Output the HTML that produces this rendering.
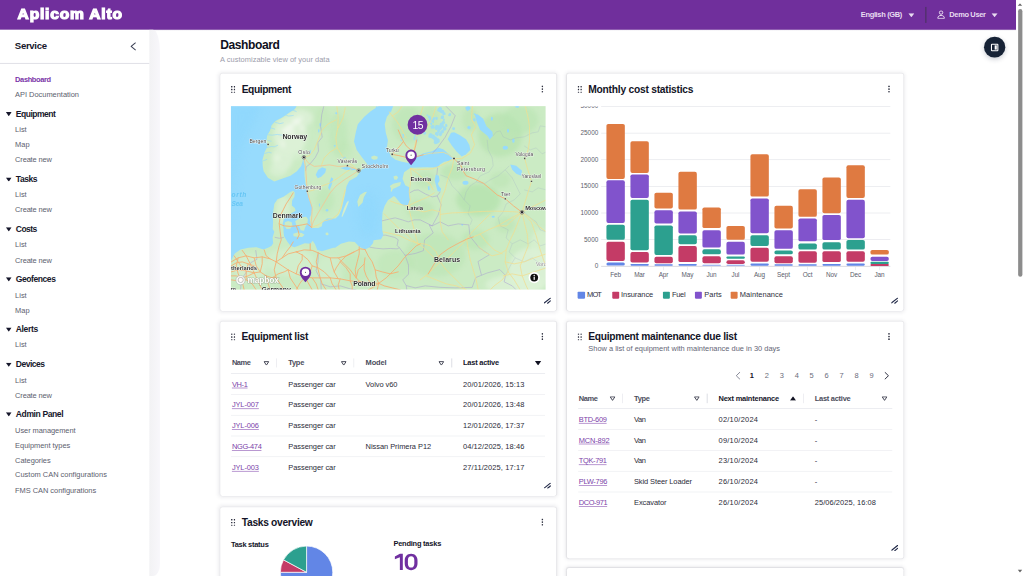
<!DOCTYPE html>
<html><head><meta charset="utf-8"><title>Aplicom Alto - Dashboard</title><style>
html,body{margin:0;padding:0;background:#fff;overflow:hidden;width:1024px;height:576px}
#root{position:absolute;left:0;top:0;width:1920px;height:1080px;transform:scale(0.5333333);transform-origin:0 0;overflow:hidden;background:#fff;font-family:"Liberation Sans",sans-serif}
.t{position:absolute;white-space:nowrap;font-family:"Liberation Sans",sans-serif}
</style></head><body><div id="root">
<div style="position:absolute;left:0px;top:0px;width:1905px;height:56.01px;background:#702f9c;"></div>
<div style="position:absolute;left:0px;top:56.01px;width:1905px;height:2.49px;background:linear-gradient(#e9e7ee,#fff);"></div>
<div class="t" style="left:33.19px;top:7.00px;font-size:26.5px;line-height:40px;font-weight:700;color:#fff;-webkit-text-stroke:2.2px #fff;letter-spacing:1.4px;transform:scaleX(1.1);transform-origin:0 50%;">Aplicom Alto</div>
<div class="t" style="left:1614px;top:18.19px;font-size:14px;line-height:18px;font-weight:700;color:#e8dcf1;letter-spacing:-0.634px;">English (GB)</div>
<svg style="position:absolute;left:1702.69px;top:24.66px" width="11.62" height="7.31" viewBox="0 0 10 10" preserveAspectRatio="none"><path d="M0 0 L10 0 L5 10 Z" fill="#e8dcf1"/></svg>
<div style="position:absolute;left:1735.22px;top:13.31px;width:1.59px;height:29.25px;background:#48325e;"></div>
<svg style="position:absolute;left:1756.69px;top:18.56px" width="15" height="16.88" viewBox="0 0 16 18" fill="none" stroke="#e8dcf1" stroke-width="2"><circle cx="8" cy="4.9" r="3.4"/><path d="M1.4 16.6 C1.4 12.4 4 10.6 8 10.6 C12 10.6 14.6 12.4 14.6 16.6 Z" stroke-linejoin="round"/></svg>
<div class="t" style="left:1779.94px;top:18.19px;font-size:14px;line-height:18px;font-weight:700;color:#e8dcf1;letter-spacing:-0.662px;">Demo User</div>
<svg style="position:absolute;left:1859.25px;top:24.66px" width="11.62" height="7.31" viewBox="0 0 10 10" preserveAspectRatio="none"><path d="M0 0 L10 0 L5 10 Z" fill="#e8dcf1"/></svg>
<div style="position:absolute;left:1905px;top:0px;width:15px;height:1080px;background:#fff;"></div>
<div style="position:absolute;left:1908.75px;top:17.25px;width:8.06px;height:502.12px;background:#8c8c8c;border-radius:4px;"></div>
<svg style="position:absolute;left:1908.28px;top:5.91px" width="9" height="5.44" viewBox="0 0 10 10" preserveAspectRatio="none"><path d="M0 10 L10 10 L5 0 Z" fill="#666"/></svg>
<svg style="position:absolute;left:1908.28px;top:1068.28px" width="9" height="5.44" viewBox="0 0 10 10" preserveAspectRatio="none"><path d="M0 0 L10 0 L5 10 Z" fill="#666"/></svg>
<div style="position:absolute;left:0px;top:56.01px;width:279.75px;height:1023.99px;background:#fff;"></div>
<div style="position:absolute;left:279.75px;top:56.01px;width:20.44px;height:1023.99px;background:linear-gradient(90deg,#f2f2f4,#f8f7fb);border-radius:0 13.12px 13.12px 0 / 0 41.25px 22.5px 0"></div>
<div class="t" style="left:27.75px;top:75.31px;font-size:18px;line-height:23px;font-weight:700;color:#16172b;letter-spacing:-0.583px;">Service</div>
<svg style="position:absolute;left:244.12px;top:78.94px" width="11.25" height="15.75" viewBox="0 0 6 8.4" fill="none" stroke="#3c4156" stroke-width="1.1" stroke-linecap="round" stroke-linejoin="round"><path d="M5.2 0.7 L1 4.2 L5.2 7.7"/></svg>
<div style="position:absolute;left:0px;top:118.31px;width:279.75px;height:1.41px;background:#e2e2e8;"></div>
<div class="t" style="left:28.31px;top:139.69px;font-size:14px;line-height:18px;font-weight:700;color:#7a35a8;letter-spacing:-0.703px;">Dashboard</div>
<div class="t" style="left:28.31px;top:168.00px;font-size:14px;line-height:18px;font-weight:400;color:#5c5e6e;letter-spacing:-0.051px;">API Documentation</div>
<svg style="position:absolute;left:10.69px;top:209.81px" width="10.88" height="7.88" viewBox="0 0 10 10" preserveAspectRatio="none"><path d="M0 0 L10 0 L5 10 Z" fill="#16172b"/></svg>
<div class="t" style="left:29.62px;top:202.69px;font-size:16px;line-height:21px;font-weight:700;color:#16172b;letter-spacing:-0.936px;">Equipment</div>
<div class="t" style="left:28.31px;top:234.38px;font-size:14px;line-height:18px;font-weight:400;color:#5c5e6e;letter-spacing:-0.016px;">List</div>
<div class="t" style="left:28.31px;top:261.56px;font-size:14px;line-height:18px;font-weight:400;color:#5c5e6e;letter-spacing:0.070px;">Map</div>
<div class="t" style="left:28.31px;top:290.44px;font-size:14px;line-height:18px;font-weight:400;color:#5c5e6e;letter-spacing:-0.309px;">Create new</div>
<svg style="position:absolute;left:10.69px;top:332.62px" width="10.88" height="7.88" viewBox="0 0 10 10" preserveAspectRatio="none"><path d="M0 0 L10 0 L5 10 Z" fill="#16172b"/></svg>
<div class="t" style="left:29.62px;top:325.50px;font-size:16px;line-height:21px;font-weight:700;color:#16172b;letter-spacing:-0.875px;">Tasks</div>
<div class="t" style="left:28.31px;top:356.06px;font-size:14px;line-height:18px;font-weight:400;color:#5c5e6e;letter-spacing:-0.016px;">List</div>
<div class="t" style="left:28.31px;top:384.19px;font-size:14px;line-height:18px;font-weight:400;color:#5c5e6e;letter-spacing:-0.309px;">Create new</div>
<svg style="position:absolute;left:10.69px;top:426.19px" width="10.88" height="7.88" viewBox="0 0 10 10" preserveAspectRatio="none"><path d="M0 0 L10 0 L5 10 Z" fill="#16172b"/></svg>
<div class="t" style="left:29.62px;top:419.06px;font-size:16px;line-height:21px;font-weight:700;color:#16172b;letter-spacing:-1.082px;">Costs</div>
<div class="t" style="left:28.31px;top:450.19px;font-size:14px;line-height:18px;font-weight:400;color:#5c5e6e;letter-spacing:-0.016px;">List</div>
<div class="t" style="left:28.31px;top:478.50px;font-size:14px;line-height:18px;font-weight:400;color:#5c5e6e;letter-spacing:-0.309px;">Create new</div>
<svg style="position:absolute;left:10.69px;top:520.12px" width="10.88" height="7.88" viewBox="0 0 10 10" preserveAspectRatio="none"><path d="M0 0 L10 0 L5 10 Z" fill="#16172b"/></svg>
<div class="t" style="left:29.62px;top:513.00px;font-size:16px;line-height:21px;font-weight:700;color:#16172b;letter-spacing:-0.828px;">Geofences</div>
<div class="t" style="left:28.31px;top:543.56px;font-size:14px;line-height:18px;font-weight:400;color:#5c5e6e;letter-spacing:-0.016px;">List</div>
<div class="t" style="left:28.31px;top:572.62px;font-size:14px;line-height:18px;font-weight:400;color:#5c5e6e;letter-spacing:0.070px;">Map</div>
<svg style="position:absolute;left:10.69px;top:613.88px" width="10.88" height="7.88" viewBox="0 0 10 10" preserveAspectRatio="none"><path d="M0 0 L10 0 L5 10 Z" fill="#16172b"/></svg>
<div class="t" style="left:29.62px;top:606.75px;font-size:16px;line-height:21px;font-weight:700;color:#16172b;letter-spacing:-0.672px;">Alerts</div>
<div class="t" style="left:28.31px;top:637.31px;font-size:14px;line-height:18px;font-weight:400;color:#5c5e6e;letter-spacing:-0.016px;">List</div>
<svg style="position:absolute;left:10.69px;top:679.87px" width="10.88" height="7.88" viewBox="0 0 10 10" preserveAspectRatio="none"><path d="M0 0 L10 0 L5 10 Z" fill="#16172b"/></svg>
<div class="t" style="left:29.62px;top:672.75px;font-size:16px;line-height:21px;font-weight:700;color:#16172b;letter-spacing:-0.958px;">Devices</div>
<div class="t" style="left:28.31px;top:703.50px;font-size:14px;line-height:18px;font-weight:400;color:#5c5e6e;letter-spacing:-0.016px;">List</div>
<div class="t" style="left:28.31px;top:731.81px;font-size:14px;line-height:18px;font-weight:400;color:#5c5e6e;letter-spacing:-0.309px;">Create new</div>
<svg style="position:absolute;left:10.69px;top:773.44px" width="10.88" height="7.88" viewBox="0 0 10 10" preserveAspectRatio="none"><path d="M0 0 L10 0 L5 10 Z" fill="#16172b"/></svg>
<div class="t" style="left:29.62px;top:766.31px;font-size:16px;line-height:21px;font-weight:700;color:#16172b;letter-spacing:-0.728px;">Admin Panel</div>
<div class="t" style="left:28.31px;top:798.19px;font-size:14px;line-height:18px;font-weight:400;color:#5c5e6e;letter-spacing:-0.124px;">User management</div>
<div class="t" style="left:28.31px;top:825.75px;font-size:14px;line-height:18px;font-weight:400;color:#5c5e6e;letter-spacing:-0.057px;">Equipment types</div>
<div class="t" style="left:28.31px;top:853.88px;font-size:14px;line-height:18px;font-weight:400;color:#5c5e6e;letter-spacing:-0.106px;">Categories</div>
<div class="t" style="left:28.31px;top:881.25px;font-size:14px;line-height:18px;font-weight:400;color:#5c5e6e;letter-spacing:-0.026px;">Custom CAN configurations</div>
<div class="t" style="left:28.31px;top:909.94px;font-size:14px;line-height:18px;font-weight:400;color:#5c5e6e;letter-spacing:-0.095px;">FMS CAN configurations</div>
<div class="t" style="left:413.06px;top:68.94px;font-size:22.6px;line-height:29px;font-weight:700;color:#0f1020;letter-spacing:-0.807px;">Dashboard</div>
<div class="t" style="left:412.69px;top:102.94px;font-size:14px;line-height:18px;font-weight:400;color:#9c9dab;letter-spacing:0.046px;">A customizable view of your data</div>
<div style="position:absolute;left:1845.19px;top:69px;width:39.38px;height:39.38px;border-radius:50%;background:#172336;box-shadow:0 3px 10px rgba(20,30,60,0.22)"></div>
<div style="position:absolute;left:1857.75px;top:81.56px;width:14.25px;height:14.25px;border:2.2px solid #fff;box-sizing:border-box;border-radius:2px"><div style="position:absolute;right:1.2px;top:1.2px;bottom:1.2px;width:3.4px;background:#fff"></div></div>
<div style="position:absolute;left:412.69px;top:138.38px;width:630.37px;height:445.12px;background:#fff;border-radius:4px;box-shadow:0 0 8px 1px rgba(40,40,70,0.12), 0 0 2px rgba(40,40,70,0.08);"></div>
<div style="position:absolute;left:1062.56px;top:138.38px;width:631.12px;height:445.12px;background:#fff;border-radius:4px;box-shadow:0 0 8px 1px rgba(40,40,70,0.12), 0 0 2px rgba(40,40,70,0.08);"></div>
<div style="position:absolute;left:412.69px;top:602.62px;width:630.37px;height:327.38px;background:#fff;border-radius:4px;box-shadow:0 0 8px 1px rgba(40,40,70,0.12), 0 0 2px rgba(40,40,70,0.08);"></div>
<div style="position:absolute;left:1062.56px;top:602.62px;width:631.12px;height:444px;background:#fff;border-radius:4px;box-shadow:0 0 8px 1px rgba(40,40,70,0.12), 0 0 2px rgba(40,40,70,0.08);"></div>
<div style="position:absolute;left:412.69px;top:951.19px;width:630.37px;height:173.81px;background:#fff;border-radius:4px;box-shadow:0 0 8px 1px rgba(40,40,70,0.12), 0 0 2px rgba(40,40,70,0.08);"></div>
<div style="position:absolute;left:1062.56px;top:1065px;width:631.12px;height:60px;background:#fff;border-radius:4px;box-shadow:0 0 8px 1px rgba(40,40,70,0.12), 0 0 2px rgba(40,40,70,0.08);"></div>
<svg style="position:absolute;left:432.94px;top:160.5px" width="8.25" height="13.88" viewBox="0 0 4.4 7.4"><rect x="0.08" y="0.08" width="1.45" height="1.45" rx="0.35" fill="#2f3140"/><rect x="0.08" y="2.98" width="1.45" height="1.45" rx="0.35" fill="#2f3140"/><rect x="0.08" y="5.88" width="1.45" height="1.45" rx="0.35" fill="#2f3140"/><rect x="2.88" y="0.08" width="1.45" height="1.45" rx="0.35" fill="#2f3140"/><rect x="2.88" y="2.98" width="1.45" height="1.45" rx="0.35" fill="#2f3140"/><rect x="2.88" y="5.88" width="1.45" height="1.45" rx="0.35" fill="#2f3140"/></svg>
<div class="t" style="left:453.19px;top:155.19px;font-size:19.2px;line-height:26px;font-weight:700;color:#131427;letter-spacing:-0.768px;">Equipment</div>
<svg style="position:absolute;left:1014.75px;top:160.31px" width="3.75" height="13.88" viewBox="0 0 2 7.4"><circle cx="1" cy="1.00" r="0.85" fill="#2f3140"/><circle cx="1" cy="3.70" r="0.85" fill="#2f3140"/><circle cx="1" cy="6.40" r="0.85" fill="#2f3140"/></svg>
<svg style="position:absolute;left:1020px;top:558.38px" width="13.12" height="11.25" viewBox="0 0 7 6" fill="none" stroke="#222a48" stroke-width="1.15" stroke-linecap="round"><path d="M0.5 5.2 L6.4 0.5 M3.6 5.6 L6.4 3.3"/></svg>
<div style="position:absolute;left:425.62px;top:191.25px;width:605px;height:359.44px;overflow:hidden"><svg width="605" height="359.44" viewBox="227 102 322.667 191.7" style="position:absolute;left:0;top:0;display:block">
<defs><filter id="b2" x="-50%" y="-50%" width="200%" height="200%"><feGaussianBlur stdDeviation="2.2"/></filter><filter id="b1" x="-50%" y="-50%" width="200%" height="200%"><feGaussianBlur stdDeviation="1"/></filter><filter id="b4" x="-50%" y="-50%" width="200%" height="200%"><feGaussianBlur stdDeviation="5"/></filter><clipPath id="landclip"><path d="M300.0 100.0 L294.6 109.3 L288.7 113.1 L281.7 117.9 L275.2 121.1 L271.4 125.5 L269.8 130.8 L267.1 135.1 L266.1 141.6 L267.1 147.0 L264.4 152.4 L262.3 159.9 L262.5 166.1 L263.4 171.5 L267.7 177.9 L274.1 181.7 L281.7 179.0 L290.3 175.8 L296.7 171.5 L301.0 166.1 L302.8 160.5 L304.3 166.0 L304.3 175.8 L305.3 184.4 L307.7 190.0 L308.5 198.7 L312.0 207.4 L311.1 214.3 L309.4 217.8 L310.3 224.7 L312.0 228.2 L318.1 228.2 L321.6 226.5 L322.4 222.1 L326.8 218.6 L335.4 218.6 L338.9 215.2 L341.5 209.1 L343.3 201.3 L345.0 194.3 L346.3 186.5 L349.0 181.1 L356.5 176.8 L361.9 169.3 L368.5 167.0 L366.2 163.1 L361.9 157.7 L356.5 150.2 L353.8 141.6 L355.5 133.0 L357.6 124.4 L364.1 116.8 L370.5 111.5 L378.1 106.3 L380.0 100.0 Z M395.3 100.0 L391.0 111.5 L386.7 116.8 L384.5 124.4 L385.6 133.0 L387.7 140.5 L386.7 148.0 L388.8 152.4 L391.0 156.7 L395.3 159.9 L401.7 162.0 L408.2 163.1 L412.0 161.0 L416.8 156.7 L423.3 153.4 L431.9 151.3 L438.3 148.0 L443.0 149.5 L447.0 153.0 L450.8 156.0 L453.8 158.6 L449.0 161.0 L444.0 162.0 L440.0 164.5 L437.3 167.7 L425.0 167.3 L410.3 167.9 L403.9 172.5 L402.3 179.0 L405.0 185.5 L409.3 187.6 L409.3 193.0 L409.8 200.5 L408.2 204.8 L403.9 206.4 L399.6 202.7 L395.3 197.3 L393.7 196.2 L387.7 200.5 L384.5 205.9 L382.4 212.4 L381.8 221.0 L382.0 229.6 L383.1 235.3 L380.8 239.3 L373.4 240.5 L372.8 243.3 L369.4 247.3 L364.8 249.6 L359.1 246.8 L354.5 242.2 L348.7 241.6 L340.7 243.9 L335.0 247.9 L333.1 247.9 L327.4 249.6 L321.7 251.4 L317.1 250.2 L314.8 244.5 L312.5 241.0 L310.2 243.9 L304.5 243.3 L298.8 245.6 L294.2 247.3 L290.7 246.2 L287.3 242.2 L283.9 236.5 L283.3 231.9 L283.4 229.1 L282.5 223.9 L283.4 219.5 L287.0 216.0 L292.0 213.0 L295.5 210.8 L294.6 208.2 L291.6 205.6 L292.0 200.4 L294.2 196.9 L294.6 192.6 L292.9 190.9 L289.4 192.6 L283.4 196.9 L277.3 199.5 L274.2 203.9 L273.4 209.1 L272.5 216.0 L272.9 222.1 L272.5 229.1 L274.1 231.9 L272.4 237.6 L273.0 243.3 L271.2 246.2 L267.8 247.9 L263.2 249.6 L256.4 247.3 L248.3 247.9 L240.3 249.6 L234.6 253.6 L231.1 260.5 L225.0 262.0 L225.0 296.0 L552.0 296.0 L552.0 100.0 Z"/></clipPath></defs>
<rect x="226" y="101" width="326" height="196" fill="#97dbfd"/>
<g filter="url(#b4)" opacity="0.55">
<path d="M229 104 L262 104 L240 150 L232 200 L229 230 Z" fill="#8bd6fd"/>
<ellipse cx="368" cy="215" rx="10" ry="22" fill="#8dd7fd"/>
</g>
<path d="M300.0 100.0 L294.6 109.3 L288.7 113.1 L281.7 117.9 L275.2 121.1 L271.4 125.5 L269.8 130.8 L267.1 135.1 L266.1 141.6 L267.1 147.0 L264.4 152.4 L262.3 159.9 L262.5 166.1 L263.4 171.5 L267.7 177.9 L274.1 181.7 L281.7 179.0 L290.3 175.8 L296.7 171.5 L301.0 166.1 L302.8 160.5 L304.3 166.0 L304.3 175.8 L305.3 184.4 L307.7 190.0 L308.5 198.7 L312.0 207.4 L311.1 214.3 L309.4 217.8 L310.3 224.7 L312.0 228.2 L318.1 228.2 L321.6 226.5 L322.4 222.1 L326.8 218.6 L335.4 218.6 L338.9 215.2 L341.5 209.1 L343.3 201.3 L345.0 194.3 L346.3 186.5 L349.0 181.1 L356.5 176.8 L361.9 169.3 L368.5 167.0 L366.2 163.1 L361.9 157.7 L356.5 150.2 L353.8 141.6 L355.5 133.0 L357.6 124.4 L364.1 116.8 L370.5 111.5 L378.1 106.3 L380.0 100.0 Z" fill="#cbebc4"/>
<path d="M395.3 100.0 L391.0 111.5 L386.7 116.8 L384.5 124.4 L385.6 133.0 L387.7 140.5 L386.7 148.0 L388.8 152.4 L391.0 156.7 L395.3 159.9 L401.7 162.0 L408.2 163.1 L412.0 161.0 L416.8 156.7 L423.3 153.4 L431.9 151.3 L438.3 148.0 L443.0 149.5 L447.0 153.0 L450.8 156.0 L453.8 158.6 L449.0 161.0 L444.0 162.0 L440.0 164.5 L437.3 167.7 L425.0 167.3 L410.3 167.9 L403.9 172.5 L402.3 179.0 L405.0 185.5 L409.3 187.6 L409.3 193.0 L409.8 200.5 L408.2 204.8 L403.9 206.4 L399.6 202.7 L395.3 197.3 L393.7 196.2 L387.7 200.5 L384.5 205.9 L382.4 212.4 L381.8 221.0 L382.0 229.6 L383.1 235.3 L380.8 239.3 L373.4 240.5 L372.8 243.3 L369.4 247.3 L364.8 249.6 L359.1 246.8 L354.5 242.2 L348.7 241.6 L340.7 243.9 L335.0 247.9 L333.1 247.9 L327.4 249.6 L321.7 251.4 L317.1 250.2 L314.8 244.5 L312.5 241.0 L310.2 243.9 L304.5 243.3 L298.8 245.6 L294.2 247.3 L290.7 246.2 L287.3 242.2 L283.9 236.5 L283.3 231.9 L283.4 229.1 L282.5 223.9 L283.4 219.5 L287.0 216.0 L292.0 213.0 L295.5 210.8 L294.6 208.2 L291.6 205.6 L292.0 200.4 L294.2 196.9 L294.6 192.6 L292.9 190.9 L289.4 192.6 L283.4 196.9 L277.3 199.5 L274.2 203.9 L273.4 209.1 L272.5 216.0 L272.9 222.1 L272.5 229.1 L274.1 231.9 L272.4 237.6 L273.0 243.3 L271.2 246.2 L267.8 247.9 L263.2 249.6 L256.4 247.3 L248.3 247.9 L240.3 249.6 L234.6 253.6 L231.1 260.5 L225.0 262.0 L225.0 296.0 L552.0 296.0 L552.0 100.0 Z" fill="#cbebc4"/>
<path d="M284.6 222.5 L288.0 221.2 L291.5 222.5 L292.2 226.0 L290.0 229.0 L286.5 229.2 L284.4 226.5 Z" fill="#cbebc4"/>
<path d="M295.0 221.5 L298.5 218.8 L302.0 217.5 L306.0 216.8 L307.8 219.5 L307.0 224.0 L305.0 227.5 L303.8 231.0 L300.5 230.5 L299.0 226.5 L296.0 225.5 Z" fill="#cbebc4"/>
<path d="M293.0 234.0 L297.0 232.6 L301.5 233.2 L304.3 235.0 L302.0 237.2 L297.0 237.0 L293.5 236.3 Z" fill="#cbebc4"/>
<path d="M325.4 232.8 L327.6 232.6 L328.6 234.4 L327.0 235.6 L325.4 234.6 Z" fill="#cbebc4"/>
<path d="M347.9 200.8 L348.6 202.0 L345.5 210.0 L342.3 217.0 L341.3 216.6 L343.6 209.0 L346.3 203.0 Z" fill="#d3eecd"/>
<path d="M366.8 191.9 L363.6 197.3 L362.4 202.7 L358.1 207.2 L357.1 201.6 L359.8 195.1 L364.1 192.4 Z" fill="#cbebc4"/>
<path d="M393.2 176.6 L396.0 175.6 L398.0 177.4 L396.6 179.8 L394.0 179.6 Z" fill="#cbebc4"/>
<path d="M389.6 186.2 L393.0 184.0 L397.0 183.0 L400.8 182.2 L400.0 185.6 L396.0 187.6 L392.6 189.2 L391.6 192.0 L390.4 191.4 L391.0 188.6 Z" fill="#cbebc4"/>
<path d="M371.0 157.0 L374.0 155.6 L377.6 156.8 L377.0 159.4 L373.6 160.0 L371.4 159.0 Z" fill="#cbebc4"/>
<g clip-path="url(#landclip)"><g filter="url(#b2)">
<ellipse cx="338.0" cy="135.0" rx="9.0" ry="22.0" fill="#b9e4b2" opacity="0.45"/>
<ellipse cx="325.0" cy="200.0" rx="9.0" ry="12.0" fill="#b9e4b2" opacity="0.45"/>
<ellipse cx="345.0" cy="150.0" rx="6.0" ry="10.0" fill="#b9e4b2" opacity="0.35"/>
<ellipse cx="322.0" cy="120.0" rx="8.0" ry="12.0" fill="#b9e4b2" opacity="0.35"/>
<ellipse cx="408.0" cy="125.0" rx="16.0" ry="18.0" fill="#b9e4b2" opacity="0.55"/>
<ellipse cx="430.0" cy="120.0" rx="10.0" ry="14.0" fill="#b9e4b2" opacity="0.4"/>
<ellipse cx="478.0" cy="200.0" rx="22.0" ry="16.0" fill="#b9e4b2" opacity="1"/>
<ellipse cx="500.0" cy="135.0" rx="22.0" ry="22.0" fill="#b9e4b2" opacity="0.8"/>
<ellipse cx="455.0" cy="172.0" rx="14.0" ry="8.0" fill="#b9e4b2" opacity="0.7"/>
<ellipse cx="520.0" cy="120.0" rx="18.0" ry="14.0" fill="#b9e4b2" opacity="0.6"/>
<ellipse cx="470.0" cy="120.0" rx="8.0" ry="12.0" fill="#b9e4b2" opacity="0.5"/>
<ellipse cx="435.0" cy="255.0" rx="30.0" ry="22.0" fill="#b9e4b2" opacity="0.55"/>
<ellipse cx="420.0" cy="210.0" rx="14.0" ry="10.0" fill="#b9e4b2" opacity="0.5"/>
<ellipse cx="425.0" cy="180.0" rx="10.0" ry="8.0" fill="#b9e4b2" opacity="0.5"/>
<ellipse cx="500.0" cy="180.0" rx="10.0" ry="8.0" fill="#b9e4b2" opacity="0.5"/>
<ellipse cx="475.0" cy="240.0" rx="14.0" ry="10.0" fill="#b9e4b2" opacity="0.6"/>
<ellipse cx="395.0" cy="265.0" rx="18.0" ry="14.0" fill="#b9e4b2" opacity="0.4"/>
<ellipse cx="355.0" cy="268.0" rx="18.0" ry="14.0" fill="#b9e4b2" opacity="0.35"/>
<ellipse cx="505.0" cy="225.0" rx="10.0" ry="8.0" fill="#b9e4b2" opacity="0.5"/>
<ellipse cx="290.0" cy="135.0" rx="17.0" ry="19.0" fill="#dcf1d6" opacity="1"/>
<ellipse cx="282.0" cy="158.0" rx="11.0" ry="13.0" fill="#dcf1d6" opacity="0.9"/>
<ellipse cx="300.0" cy="118.0" rx="13.0" ry="9.0" fill="#dcf1d6" opacity="0.9"/>
<ellipse cx="278.0" cy="170.0" rx="9.0" ry="7.0" fill="#dcf1d6" opacity="0.7"/>
<ellipse cx="296.0" cy="150.0" rx="8.0" ry="10.0" fill="#dcf1d6" opacity="0.6"/>
<ellipse cx="530.0" cy="270.0" rx="22.0" ry="22.0" fill="#dcf1d6" opacity="0.9"/>
<ellipse cx="515.0" cy="285.0" rx="30.0" ry="10.0" fill="#dcf1d6" opacity="0.8"/>
<ellipse cx="540.0" cy="245.0" rx="10.0" ry="16.0" fill="#dcf1d6" opacity="0.6"/>
<ellipse cx="283.0" cy="210.0" rx="7.0" ry="14.0" fill="#dcf1d6" opacity="0.7"/>
<ellipse cx="290.0" cy="262.0" rx="25.0" ry="14.0" fill="#dcf1d6" opacity="0.45"/>
<ellipse cx="250.0" cy="268.0" rx="16.0" ry="14.0" fill="#dcf1d6" opacity="0.5"/>
<ellipse cx="330.0" cy="270.0" rx="14.0" ry="14.0" fill="#dcf1d6" opacity="0.3"/>
<ellipse cx="296.0" cy="122.0" rx="4.0" ry="2.4" fill="#f6fbf4" opacity="0.9"/>
<ellipse cx="290.0" cy="127.0" rx="4.0" ry="2.2" fill="#f6fbf4" opacity="0.9"/>
<ellipse cx="285.0" cy="131.0" rx="3.4" ry="2.4" fill="#f6fbf4" opacity="0.9"/>
<ellipse cx="291.0" cy="133.0" rx="3.0" ry="2.0" fill="#f6fbf4" opacity="0.8"/>
<ellipse cx="302.0" cy="128.0" rx="2.4" ry="2.0" fill="#f6fbf4" opacity="0.7"/>
<ellipse cx="283.0" cy="145.0" rx="2.0" ry="2.4" fill="#f6fbf4" opacity="0.7"/>
<ellipse cx="281.0" cy="141.0" rx="1.6" ry="2.0" fill="#f6fbf4" opacity="0.6"/>
<ellipse cx="277.0" cy="158.0" rx="1.6" ry="3.0" fill="#f6fbf4" opacity="0.6"/>
<ellipse cx="300.0" cy="118.0" rx="3.0" ry="1.6" fill="#f6fbf4" opacity="0.7"/>
</g></g>
<path d="M450.8 133.0 L447.5 139.4 L451.8 145.9 L456.1 151.3 L461.5 156.7 L465.8 154.5 L470.1 150.2 L469.1 144.8 L465.8 139.4 L459.4 135.1 L454.0 132.4 Z" fill="#97dbfd"/>
<path d="M474.4 114.1 L476.6 122.2 L479.8 129.8 L487.4 136.2 L489.5 139.6 L492.7 136.2 L492.2 131.9 L486.3 126.5 L483.0 119.0 L477.7 114.7 Z" fill="#97dbfd"/>
<path d="M435.6 174.7 L438.6 175.8 L439.4 180.6 L437.6 184.0 L439.0 186.6 L441.0 189.0 L440.2 192.0 L437.4 191.4 L436.0 186.5 L434.4 180.5 Z" fill="#97dbfd"/>
<path d="M318.0 170.0 L322.0 167.5 L326.0 169.0 L325.0 173.0 L321.0 177.0 L317.5 178.5 L315.5 175.0 Z" fill="#97dbfd"/>
<path d="M331.0 177.5 L333.0 179.0 L331.2 186.0 L329.2 190.5 L328.0 188.0 L329.5 182.0 Z" fill="#97dbfd"/>
<path d="M340.0 168.2 L346.0 167.0 L352.0 168.2 L357.6 169.6 L352.0 170.4 L345.0 169.8 Z" fill="#97dbfd"/>
<path d="M510.0 164.6 L516.0 166.0 L521.8 171.0 L521.0 175.8 L516.0 174.0 L512.0 170.0 Z" fill="#97dbfd"/>
<path d="M427.6 186.6 L429.2 186.2 L429.6 190.0 L428.0 190.4 Z" fill="#97dbfd"/>
<ellipse cx="465.3" cy="182.8" rx="3.0" ry="2.0" fill="#97dbfd"/>
<ellipse cx="505.1" cy="148.0" rx="2.7" ry="2.0" fill="#97dbfd"/>
<ellipse cx="513.2" cy="140.8" rx="1.2" ry="2.2" fill="#97dbfd"/>
<ellipse cx="507.8" cy="130.8" rx="1.0" ry="2.0" fill="#97dbfd"/>
<ellipse cx="491.7" cy="119.0" rx="1.0" ry="2.0" fill="#97dbfd"/>
<ellipse cx="468.0" cy="108.2" rx="2.4" ry="1.6" fill="#97dbfd"/>
<ellipse cx="468.5" cy="127.6" rx="1.4" ry="1.0" fill="#97dbfd"/>
<ellipse cx="517.0" cy="107.0" rx="2.0" ry="1.0" fill="#97dbfd"/>
<ellipse cx="336.4" cy="113.5" rx="1.4" ry="1.0" fill="#97dbfd"/>
<ellipse cx="320.0" cy="125.0" rx="0.8" ry="2.0" fill="#97dbfd"/>
<ellipse cx="344.0" cy="158.0" rx="1.6" ry="1.0" fill="#97dbfd"/>
<ellipse cx="310.0" cy="152.0" rx="0.7" ry="2.2" fill="#97dbfd"/>
<ellipse cx="334.5" cy="146.0" rx="1.0" ry="0.8" fill="#97dbfd"/>
<ellipse cx="493.0" cy="217.0" rx="1.6" ry="1.0" fill="#97dbfd"/>
<ellipse cx="376.5" cy="107.5" rx="1.0" ry="1.0" fill="#97dbfd"/>
<ellipse cx="326.8" cy="210.4" rx="1.3" ry="1.3" fill="#97dbfd"/>
<ellipse cx="319.2" cy="205.2" rx="0.6" ry="1.7" fill="#97dbfd"/>
<ellipse cx="462.0" cy="225.0" rx="1.0" ry="0.8" fill="#97dbfd"/>
<ellipse cx="318.6" cy="131.0" rx="0.7" ry="1.8" fill="#97dbfd"/>
<g opacity="0.8">
<path d="M438.8 112.2 L436.8 110.6 L438.1 108.4 L439.8 106.7 L441.8 108.1 L441.8 110.5 L440.9 112.8 Z" fill="#97dbfd"/>
<path d="M444.2 112.4 L442.8 113.6 L441.3 113.6 L440.0 112.4 L440.1 110.0 L442.1 109.9 L443.6 110.5 Z" fill="#97dbfd"/>
<path d="M442.2 112.1 L443.9 111.8 L445.0 112.9 L445.6 114.6 L444.0 115.2 L442.6 115.7 L442.2 114.0 Z" fill="#97dbfd"/>
<path d="M450.3 116.1 L449.2 116.5 L447.9 115.9 L448.4 114.3 L449.2 113.2 L450.6 113.5 L451.0 115.0 Z" fill="#97dbfd"/>
<path d="M427.7 116.5 L428.4 115.7 L429.5 115.7 L430.5 116.6 L429.9 118.1 L428.7 118.5 L427.5 118.0 Z" fill="#97dbfd"/>
<path d="M428.7 120.3 L428.5 118.2 L430.2 117.1 L431.6 118.3 L432.4 120.0 L431.4 121.7 L429.5 122.2 Z" fill="#97dbfd"/>
<path d="M433.3 117.3 L434.9 117.3 L434.7 119.0 L434.3 120.3 L432.9 120.8 L432.3 119.4 L432.2 118.0 Z" fill="#97dbfd"/>
<path d="M437.6 118.9 L436.9 120.1 L435.6 119.9 L434.7 118.9 L435.3 117.6 L436.3 116.8 L437.3 117.5 Z" fill="#97dbfd"/>
<path d="M440.6 116.8 L441.7 115.3 L443.6 115.8 L443.8 117.8 L443.2 119.5 L441.7 119.2 L440.3 118.6 Z" fill="#97dbfd"/>
<path d="M431.7 120.1 L433.1 119.9 L433.8 121.1 L433.8 122.3 L433.0 123.3 L432.1 122.5 L431.4 121.6 Z" fill="#97dbfd"/>
<path d="M443.6 124.4 L442.3 124.4 L440.7 123.6 L441.6 121.8 L442.8 120.8 L444.3 121.4 L445.2 123.2 Z" fill="#97dbfd"/>
<path d="M443.6 126.7 L442.1 128.1 L439.9 127.8 L439.1 125.4 L440.2 123.0 L442.2 123.4 L443.6 124.6 Z" fill="#97dbfd"/>
<path d="M431.2 128.9 L430.2 126.7 L431.7 125.3 L433.1 124.9 L434.2 125.9 L434.2 127.6 L433.1 128.9 Z" fill="#97dbfd"/>
<path d="M434.8 125.8 L436.4 125.1 L438.3 125.2 L438.9 127.4 L438.0 129.5 L435.6 130.4 L434.1 128.1 Z" fill="#97dbfd"/>
<path d="M437.6 127.6 L438.6 125.8 L440.2 126.3 L442.0 126.9 L441.7 129.2 L440.1 130.6 L438.1 129.8 Z" fill="#97dbfd"/>
<path d="M442.7 130.3 L442.6 128.2 L443.3 126.0 L445.2 126.8 L446.2 128.2 L446.0 130.1 L444.4 130.9 Z" fill="#97dbfd"/>
<path d="M437.4 132.4 L436.8 131.2 L437.1 129.7 L438.4 129.2 L439.7 129.9 L439.6 131.6 L439.0 133.6 Z" fill="#97dbfd"/>
<path d="M440.9 130.6 L442.2 129.8 L443.6 130.5 L443.9 132.3 L442.7 133.4 L441.0 134.2 L439.6 132.3 Z" fill="#97dbfd"/>
<path d="M434.5 134.3 L435.3 132.5 L436.6 131.8 L438.2 132.3 L438.5 134.2 L437.7 136.5 L435.8 135.6 Z" fill="#97dbfd"/>
<path d="M441.9 134.9 L440.7 136.3 L439.2 136.0 L438.0 135.1 L438.7 133.7 L439.6 132.5 L441.4 132.8 Z" fill="#97dbfd"/>
<path d="M432.0 133.9 L432.3 136.2 L431.6 138.0 L429.9 138.1 L428.0 137.3 L428.4 134.9 L429.9 133.2 Z" fill="#97dbfd"/>
<path d="M431.9 138.9 L430.4 137.7 L430.8 135.3 L432.8 134.5 L434.6 135.7 L435.0 138.0 L433.6 139.6 Z" fill="#97dbfd"/>
<path d="M435.4 141.6 L433.5 140.7 L433.3 138.7 L434.1 137.1 L435.7 136.5 L437.0 137.9 L437.4 140.4 Z" fill="#97dbfd"/>
<path d="M439.5 139.7 L439.6 142.2 L437.6 143.6 L435.3 142.5 L435.4 140.0 L436.5 138.5 L438.1 138.4 Z" fill="#97dbfd"/>
<path d="M436.4 144.1 L434.7 144.4 L433.4 142.6 L434.2 140.4 L436.1 140.1 L437.7 141.0 L438.0 143.2 Z" fill="#97dbfd"/>
<path d="M454.7 129.5 L453.7 130.5 L452.4 129.9 L451.9 128.5 L452.7 127.4 L453.8 127.5 L454.9 128.0 Z" fill="#97dbfd"/>
<path d="M423.7 135.0 L422.9 133.8 L423.6 132.5 L424.6 132.1 L425.9 132.4 L425.9 134.0 L424.9 134.7 Z" fill="#97dbfd"/>
<path d="M416.3 139.3 L414.8 140.8 L413.2 139.4 L413.6 137.4 L414.4 135.5 L416.5 135.6 L417.3 137.8 Z" fill="#97dbfd"/>
<path d="M415.0 142.2 L414.7 140.8 L415.2 139.8 L416.3 138.6 L417.4 139.9 L417.4 141.5 L416.4 142.9 Z" fill="#97dbfd"/>
<path d="M414.3 136.3 L414.4 135.0 L415.4 134.6 L416.1 134.9 L416.5 135.7 L416.1 136.6 L415.2 137.0 Z" fill="#97dbfd"/>
<path d="M403.0 136.5 L402.3 135.9 L401.7 134.9 L402.6 134.2 L403.6 134.2 L404.2 135.1 L404.0 136.3 Z" fill="#97dbfd"/>
<path d="M401.7 137.9 L401.8 136.9 L402.4 136.3 L403.2 136.4 L403.3 137.2 L403.2 138.0 L402.5 138.1 Z" fill="#97dbfd"/>
<path d="M402.1 140.4 L401.5 141.0 L400.9 141.3 L400.2 140.8 L400.3 139.9 L400.9 139.5 L401.7 139.6 Z" fill="#97dbfd"/>
<path d="M465.1 107.2 L467.1 106.3 L469.1 105.9 L469.8 108.1 L469.2 110.1 L467.4 111.5 L465.6 109.8 Z" fill="#97dbfd"/>
<path d="M467.4 127.1 L468.5 125.8 L469.9 126.5 L470.7 127.8 L470.1 129.2 L468.8 129.6 L467.6 128.8 Z" fill="#97dbfd"/>
<path d="M472.8 120.5 L473.0 119.2 L474.0 118.2 L475.2 118.9 L475.7 120.3 L475.0 121.7 L473.7 121.3 Z" fill="#97dbfd"/>
<path d="M473.6 114.0 L474.5 113.1 L475.4 113.8 L475.8 114.5 L475.6 115.5 L474.8 115.5 L474.1 115.1 Z" fill="#97dbfd"/>
<path d="M447.3 126.3 L446.3 127.3 L445.0 127.0 L444.9 125.5 L445.1 124.2 L446.3 123.9 L447.0 125.0 Z" fill="#97dbfd"/>
<path d="M432.2 122.9 L432.1 124.1 L431.8 125.4 L430.8 125.1 L430.1 124.3 L430.0 123.0 L431.1 122.5 Z" fill="#97dbfd"/>
<path d="M444.2 121.1 L443.3 121.3 L442.7 120.4 L442.9 119.5 L443.5 118.9 L444.5 119.1 L444.5 120.2 Z" fill="#97dbfd"/>
<path d="M426.4 115.0 L427.0 114.7 L427.7 114.6 L428.2 115.3 L427.9 116.1 L427.2 116.1 L426.3 116.1 Z" fill="#97dbfd"/>
</g>
<path d="M267.4 134.9 L272.0 135.3 L277.0 134.6 L282.6 135.4" fill="none" stroke="#97dbfd" stroke-width="0.7" stroke-linecap="round" stroke-linejoin="round" opacity="0.9"/>
<path d="M266.8 147.8 L271.0 146.6 L274.0 146.9 L277.3 145.6" fill="none" stroke="#97dbfd" stroke-width="0.7" stroke-linecap="round" stroke-linejoin="round" opacity="0.9"/>
<path d="M284.0 114.6 L288.5 116.2 L293.0 115.6" fill="none" stroke="#97dbfd" stroke-width="0.7" stroke-linecap="round" stroke-linejoin="round" opacity="0.9"/>
<path d="M275.0 122.4 L279.6 123.8 L283.0 123.0" fill="none" stroke="#97dbfd" stroke-width="0.7" stroke-linecap="round" stroke-linejoin="round" opacity="0.9"/>
<path d="M264.6 153.6 L268.6 152.4 L271.0 153.0" fill="none" stroke="#97dbfd" stroke-width="0.7" stroke-linecap="round" stroke-linejoin="round" opacity="0.9"/>
<path d="M263.0 161.0 L266.5 159.6" fill="none" stroke="#97dbfd" stroke-width="0.7" stroke-linecap="round" stroke-linejoin="round" opacity="0.9"/>
<path d="M270.4 128.0 L274.5 129.2" fill="none" stroke="#97dbfd" stroke-width="0.7" stroke-linecap="round" stroke-linejoin="round" opacity="0.9"/>
<path d="M303.0 159.5 L303.5 163.0 L303.9 167.0" fill="none" stroke="#97dbfd" stroke-width="0.7" stroke-linecap="round" stroke-linejoin="round" opacity="0.9"/>
<path d="M292.6 110.2 L296.0 111.6" fill="none" stroke="#97dbfd" stroke-width="0.7" stroke-linecap="round" stroke-linejoin="round" opacity="0.9"/>
<path d="M268.0 140.6 L271.0 141.4" fill="none" stroke="#97dbfd" stroke-width="0.7" stroke-linecap="round" stroke-linejoin="round" opacity="0.9"/>
<path d="M323.6 106.3 L321.5 115.0 L320.4 126.5 L322.0 137.3 L317.7 142.7 L318.3 151.3 L315.0 157.7 L309.7 164.2 L306.0 167.0 L305.5 171.0" fill="none" stroke="#a79ad2" stroke-width="0.55" stroke-linejoin="round" opacity="0.85"/>
<path d="M445.4 106.0 L455.0 115.8 L450.8 126.5 L445.0 137.3 L438.0 147.0 L432.0 154.0" fill="none" stroke="#a79ad2" stroke-width="0.55" stroke-linejoin="round" opacity="0.85"/>
<path d="M437.4 168.0 L436.6 175.0" fill="none" stroke="#a79ad2" stroke-width="0.55" stroke-linejoin="round" opacity="0.85"/>
<path d="M440.0 192.0 L437.0 196.0" fill="none" stroke="#a79ad2" stroke-width="0.55" stroke-linejoin="round" opacity="0.85"/>
<path d="M409.5 193.0 L414.0 190.5 L418.0 190.0 L425.0 194.0 L432.0 197.0 L437.0 196.0 L441.0 205.0 L438.0 215.0 L432.0 226.0" fill="none" stroke="#a79ad2" stroke-width="0.55" stroke-linejoin="round" opacity="0.85"/>
<path d="M381.8 221.0 L388.0 219.5 L395.0 218.0 L402.0 220.0 L408.0 222.0 L414.0 220.0 L420.0 220.0 L426.0 223.0 L432.0 226.0" fill="none" stroke="#a79ad2" stroke-width="0.55" stroke-linejoin="round" opacity="0.85"/>
<path d="M432.0 226.0 L429.0 225.0 L433.0 233.0 L424.4 239.9 L423.2 250.8 L415.2 253.6 L404.9 255.4 L399.2 247.9 L396.9 245.6 L398.0 239.9 L394.6 237.6 L385.4 235.3 L383.0 235.3" fill="none" stroke="#a79ad2" stroke-width="0.55" stroke-linejoin="round" opacity="0.85"/>
<path d="M369.4 247.3 L376.0 248.4 L383.1 249.0 L390.0 248.6 L396.9 249.0 L399.2 247.9" fill="none" stroke="#a79ad2" stroke-width="0.55" stroke-linejoin="round" opacity="0.85"/>
<path d="M404.9 255.4 L408.3 265.1 L408.3 274.3 L402.6 280.0 L406.0 285.7 L406.6 290.0" fill="none" stroke="#a79ad2" stroke-width="0.55" stroke-linejoin="round" opacity="0.85"/>
<path d="M432.0 226.0 L440.0 222.0 L448.0 226.0 L458.0 224.0 L468.6 225.0 L469.8 236.5 L479.0 247.9 L489.3 254.8 L477.8 261.7 L481.3 275.4 L487.0 273.1 L499.6 269.7 L505.3 275.4 L504.0 282.0 L512.0 286.0 L516.0 290.0" fill="none" stroke="#a79ad2" stroke-width="0.55" stroke-linejoin="round" opacity="0.85"/>
<path d="M406.0 285.7 L415.0 288.0 L425.0 286.0 L440.0 287.5 L455.0 288.0 L472.0 287.5 L475.5 277.7 L481.3 275.4" fill="none" stroke="#a79ad2" stroke-width="0.55" stroke-linejoin="round" opacity="0.85"/>
<path d="M318.2 252.5 L317.7 262.8 L315.9 270.8 L320.5 280.0 L321.1 290.0" fill="none" stroke="#a79ad2" stroke-width="0.55" stroke-linejoin="round" opacity="0.85"/>
<path d="M255.5 250.2 L256.8 259.4 L250.6 262.8 L247.2 270.8 L241.5 278.9 L240.3 290.0" fill="none" stroke="#a79ad2" stroke-width="0.55" stroke-linejoin="round" opacity="0.85"/>
<path d="M274.5 237.4 L279.0 238.4 L283.5 237.6" fill="none" stroke="#a79ad2" stroke-width="0.55" stroke-linejoin="round" opacity="0.85"/>
<path d="M321.1 284.0 L330.0 287.0 L340.0 286.0 L350.0 289.0 L356.0 290.0" fill="none" stroke="#a79ad2" stroke-width="0.55" stroke-linejoin="round" opacity="0.85"/>
<path d="M492.7 136.2 L496.0 132.0 L500.0 131.0 L503.0 137.0 L510.0 140.0 L516.0 138.0 L524.0 137.0 L532.0 133.0 L538.0 132.0 L540.0 126.0 L546.0 127.0" fill="none" stroke="#9fa8c8" stroke-width="0.4" stroke-linejoin="round" opacity="0.6"/>
<path d="M487.0 140.0 L488.0 150.0 L492.0 158.0 L493.0 166.0 L489.0 172.0 L480.0 176.0 L476.0 182.0" fill="none" stroke="#9fa8c8" stroke-width="0.4" stroke-linejoin="round" opacity="0.6"/>
<path d="M476.0 182.0 L470.0 186.0 L466.0 192.0 L464.0 200.0 L470.0 206.0 L468.0 214.0 L472.0 220.0 L470.0 225.0" fill="none" stroke="#9fa8c8" stroke-width="0.4" stroke-linejoin="round" opacity="0.6"/>
<path d="M476.0 182.0 L484.0 184.0 L490.0 180.0 L498.0 176.0 L505.0 170.0 L509.0 166.0" fill="none" stroke="#9fa8c8" stroke-width="0.4" stroke-linejoin="round" opacity="0.6"/>
<path d="M505.0 170.0 L512.0 178.0 L516.0 186.0 L520.0 194.0 L514.0 200.0 L506.0 204.0 L503.0 212.0" fill="none" stroke="#9fa8c8" stroke-width="0.4" stroke-linejoin="round" opacity="0.6"/>
<path d="M440.0 175.0 L448.0 178.0 L452.0 186.0 L458.0 192.0 L464.0 200.0" fill="none" stroke="#9fa8c8" stroke-width="0.4" stroke-linejoin="round" opacity="0.6"/>
<path d="M503.0 212.0 L498.0 218.0 L500.0 226.0 L508.0 230.0 L506.0 238.0 L512.0 244.0 L509.0 252.0 L515.0 258.0 L510.0 266.0 L505.3 275.4" fill="none" stroke="#9fa8c8" stroke-width="0.4" stroke-linejoin="round" opacity="0.6"/>
<path d="M512.0 244.0 L520.0 240.0 L528.0 244.0 L534.0 240.0 L540.0 246.0 L546.0 244.0" fill="none" stroke="#9fa8c8" stroke-width="0.4" stroke-linejoin="round" opacity="0.6"/>
<path d="M515.0 258.0 L524.0 262.0 L532.0 258.0 L540.0 264.0 L546.0 262.0" fill="none" stroke="#9fa8c8" stroke-width="0.4" stroke-linejoin="round" opacity="0.6"/>
<path d="M524.0 212.0 L530.0 218.0 L536.0 222.0 L540.0 230.0 L546.0 232.0" fill="none" stroke="#9fa8c8" stroke-width="0.4" stroke-linejoin="round" opacity="0.6"/>
<path d="M524.0 190.0 L532.0 192.0 L538.0 188.0 L546.0 190.0" fill="none" stroke="#9fa8c8" stroke-width="0.4" stroke-linejoin="round" opacity="0.6"/>
<path d="M524.0 146.0 L530.0 150.0 L536.0 148.0 L542.0 154.0 L546.0 152.0" fill="none" stroke="#9fa8c8" stroke-width="0.4" stroke-linejoin="round" opacity="0.6"/>
<path d="M336.6 106.0 L338.0 118.0 L337.5 128.0 L335.6 138.0 L337.0 148.0 L342.0 156.0 L349.0 163.0 L358.5 170.6" fill="none" stroke="#f2dd90" stroke-width="0.75" stroke-linejoin="round" stroke-linecap="round"/>
<path d="M307.0 191.9 L314.0 190.0 L322.0 186.0 L330.0 183.0 L338.0 178.0 L346.0 172.0 L353.0 168.0" fill="none" stroke="#f2dd90" stroke-width="0.75" stroke-linejoin="round" stroke-linecap="round"/>
<path d="M311.5 227.5 L318.0 225.0 L324.0 221.0 L332.0 219.0 L338.0 214.0 L341.0 207.0 L343.0 198.0 L345.0 190.0" fill="none" stroke="#f2dd90" stroke-width="0.75" stroke-linejoin="round" stroke-linecap="round"/>
<path d="M336.0 120.0 L328.0 124.0 L322.0 130.0 L318.0 140.0 L314.0 150.0 L309.0 156.0 L303.7 157.0" fill="none" stroke="#f2dd90" stroke-width="0.75" stroke-linejoin="round" stroke-linecap="round"/>
<path d="M337.0 148.0 L330.0 152.0 L324.0 158.0 L321.0 166.0" fill="none" stroke="#f2dd90" stroke-width="0.75" stroke-linejoin="round" stroke-linecap="round"/>
<path d="M345.0 108.0 L343.0 118.0 L338.0 128.0" fill="none" stroke="#f2dd90" stroke-width="0.75" stroke-linejoin="round" stroke-linecap="round"/>
<path d="M410.9 160.0 L413.0 152.0 L415.0 144.0 L416.0 136.0 L417.0 126.0 L420.0 116.0 L423.0 106.0" fill="none" stroke="#f2dd90" stroke-width="0.75" stroke-linejoin="round" stroke-linecap="round"/>
<path d="M406.0 138.0 L402.0 130.0 L397.0 122.0 L392.0 116.0 L389.0 112.0" fill="none" stroke="#f2dd90" stroke-width="0.75" stroke-linejoin="round" stroke-linecap="round"/>
<path d="M392.0 116.0 L398.0 112.0 L402.0 106.0" fill="none" stroke="#f2dd90" stroke-width="0.75" stroke-linejoin="round" stroke-linecap="round"/>
<path d="M416.0 136.0 L422.0 132.0 L428.0 126.0 L433.0 116.0 L436.0 106.0" fill="none" stroke="#f2dd90" stroke-width="0.75" stroke-linejoin="round" stroke-linecap="round"/>
<path d="M423.0 155.0 L430.0 153.4 L437.0 153.0 L443.0 152.4 L448.0 154.5 L453.8 158.6" fill="none" stroke="#f2dd90" stroke-width="0.75" stroke-linejoin="round" stroke-linecap="round"/>
<path d="M410.3 168.5 L416.0 170.0 L424.0 169.5 L432.0 169.0 L440.0 166.0 L446.0 163.0 L453.8 158.6" fill="none" stroke="#f2dd90" stroke-width="0.75" stroke-linejoin="round" stroke-linecap="round"/>
<path d="M410.3 168.5 L411.0 176.0 L410.0 184.0 L409.0 192.0 L410.0 200.0 L408.0 206.0" fill="none" stroke="#f2dd90" stroke-width="0.75" stroke-linejoin="round" stroke-linecap="round"/>
<path d="M410.3 168.5 L418.0 174.0 L424.0 180.0 L430.0 184.0 L433.0 190.0" fill="none" stroke="#f2dd90" stroke-width="0.75" stroke-linejoin="round" stroke-linecap="round"/>
<path d="M408.0 206.0 L414.0 203.0 L421.0 200.0 L428.0 197.0 L434.0 193.0" fill="none" stroke="#f2dd90" stroke-width="0.75" stroke-linejoin="round" stroke-linecap="round"/>
<path d="M408.0 206.0 L402.0 205.0 L395.0 203.0 L390.0 201.0" fill="none" stroke="#f2dd90" stroke-width="0.75" stroke-linejoin="round" stroke-linecap="round"/>
<path d="M408.0 206.0 L410.0 214.0 L412.0 222.0 L414.0 230.0 L416.0 238.0 L418.0 244.0" fill="none" stroke="#f2dd90" stroke-width="0.75" stroke-linejoin="round" stroke-linecap="round"/>
<path d="M408.0 206.0 L416.0 210.0 L424.0 212.0 L432.0 210.0 L440.0 212.0" fill="none" stroke="#f2dd90" stroke-width="0.75" stroke-linejoin="round" stroke-linecap="round"/>
<path d="M384.0 214.0 L390.0 220.0 L398.0 228.0 L406.0 234.0 L412.0 240.0 L418.0 244.0" fill="none" stroke="#f2dd90" stroke-width="0.75" stroke-linejoin="round" stroke-linecap="round"/>
<path d="M383.0 232.0 L392.0 234.0 L400.0 236.0 L408.0 240.0 L418.0 244.0" fill="none" stroke="#f2dd90" stroke-width="0.75" stroke-linejoin="round" stroke-linecap="round"/>
<path d="M418.0 244.0 L424.0 248.0 L430.0 254.0 L436.0 260.0 L440.0 262.0" fill="none" stroke="#f2dd90" stroke-width="0.75" stroke-linejoin="round" stroke-linecap="round"/>
<path d="M525.0 106.0 L527.5 116.0 L529.3 126.5 L529.3 140.5 L528.0 150.0 L524.5 158.5 L527.0 168.0 L531.3 181.4 L528.0 192.0 L525.0 202.0 L521.8 212.4" fill="none" stroke="#f2dd90" stroke-width="0.75" stroke-linejoin="round" stroke-linecap="round"/>
<path d="M472.3 106.0 L471.2 119.0 L475.5 126.5 L471.2 135.1 L474.4 144.8 L470.1 153.4 L461.5 158.8 L453.8 158.6" fill="none" stroke="#f2dd90" stroke-width="0.75" stroke-linejoin="round" stroke-linecap="round"/>
<path d="M453.8 158.6 L452.0 168.0 L448.0 178.0 L445.0 190.0 L441.0 200.0 L440.0 212.0 L440.0 222.0 L442.0 232.0 L448.0 240.0" fill="none" stroke="#f2dd90" stroke-width="0.75" stroke-linejoin="round" stroke-linecap="round"/>
<path d="M440.0 214.5 L452.0 213.0 L469.0 212.4 L482.0 211.6 L493.8 211.3 L508.0 211.6 L521.8 212.4" fill="none" stroke="#f2dd90" stroke-width="0.75" stroke-linejoin="round" stroke-linecap="round"/>
<path d="M521.8 212.4 L514.0 219.0 L506.0 226.0 L497.3 226.1" fill="none" stroke="#f2dd90" stroke-width="0.75" stroke-linejoin="round" stroke-linecap="round"/>
<path d="M521.8 212.4 L530.0 208.0 L538.0 204.0 L546.0 200.0" fill="none" stroke="#f2dd90" stroke-width="0.75" stroke-linejoin="round" stroke-linecap="round"/>
<path d="M521.8 212.4 L530.0 218.0 L538.0 226.0 L546.0 232.0" fill="none" stroke="#f2dd90" stroke-width="0.75" stroke-linejoin="round" stroke-linecap="round"/>
<path d="M521.8 212.4 L524.0 222.0 L527.0 234.0 L528.0 246.0 L524.0 256.0 L520.0 266.0 L522.0 276.0 L526.0 286.0 L528.0 290.0" fill="none" stroke="#f2dd90" stroke-width="0.75" stroke-linejoin="round" stroke-linecap="round"/>
<path d="M521.8 212.4 L518.0 222.0 L514.0 232.0 L510.0 240.0 L506.0 250.0 L505.0 262.0 L508.0 272.0" fill="none" stroke="#f2dd90" stroke-width="0.75" stroke-linejoin="round" stroke-linecap="round"/>
<path d="M521.8 212.4 L531.0 222.0 L536.0 236.0 L540.0 250.0 L544.0 262.0 L546.0 266.0" fill="none" stroke="#f2dd90" stroke-width="0.75" stroke-linejoin="round" stroke-linecap="round"/>
<path d="M505.0 262.0 L514.0 264.0 L524.0 262.0 L534.0 258.0 L546.0 254.0" fill="none" stroke="#f2dd90" stroke-width="0.75" stroke-linejoin="round" stroke-linecap="round"/>
<path d="M503.0 276.0 L512.0 274.0 L522.0 276.0 L534.0 272.0 L546.0 268.0" fill="none" stroke="#f2dd90" stroke-width="0.75" stroke-linejoin="round" stroke-linecap="round"/>
<path d="M508.0 272.0 L502.0 280.0 L494.0 286.0 L490.0 290.0" fill="none" stroke="#f2dd90" stroke-width="0.75" stroke-linejoin="round" stroke-linecap="round"/>
<path d="M508.0 272.0 L514.0 280.0 L520.0 290.0" fill="none" stroke="#f2dd90" stroke-width="0.75" stroke-linejoin="round" stroke-linecap="round"/>
<path d="M506.0 250.0 L500.0 254.0 L492.0 256.0 L484.0 252.0 L478.0 246.0" fill="none" stroke="#f2dd90" stroke-width="0.75" stroke-linejoin="round" stroke-linecap="round"/>
<path d="M473.0 237.0 L480.0 234.2 L488.0 230.0 L497.3 226.1 L506.0 221.0 L514.0 216.6 L521.8 212.4" fill="none" stroke="#f2dd90" stroke-width="0.75" stroke-linejoin="round" stroke-linecap="round"/>
<path d="M440.0 262.0 L446.0 270.0 L452.0 276.0 L458.0 282.0 L466.0 290.0" fill="none" stroke="#f2dd90" stroke-width="0.75" stroke-linejoin="round" stroke-linecap="round"/>
<path d="M440.0 262.0 L434.0 268.0 L428.0 274.0 L420.0 280.0" fill="none" stroke="#f2dd90" stroke-width="0.75" stroke-linejoin="round" stroke-linecap="round"/>
<path d="M440.0 262.0 L448.0 258.0 L456.0 250.0 L462.0 244.0 L466.4 239.3" fill="none" stroke="#f2dd90" stroke-width="0.75" stroke-linejoin="round" stroke-linecap="round"/>
<path d="M466.4 239.3 L468.0 250.0 L470.0 260.0 L473.0 270.0 L476.0 280.0 L478.0 290.0" fill="none" stroke="#f2dd90" stroke-width="0.75" stroke-linejoin="round" stroke-linecap="round"/>
<path d="M466.4 239.3 L472.0 232.0 L478.0 226.0 L484.0 220.0 L490.0 214.0" fill="none" stroke="#f2dd90" stroke-width="0.75" stroke-linejoin="round" stroke-linecap="round"/>
<path d="M480.0 234.2 L486.0 242.0 L494.0 250.0 L502.0 254.0" fill="none" stroke="#f2dd90" stroke-width="0.75" stroke-linejoin="round" stroke-linecap="round"/>
<path d="M440.0 262.0 L436.0 252.0 L430.0 246.0 L424.0 244.0 L418.0 244.0" fill="none" stroke="#f2dd90" stroke-width="0.75" stroke-linejoin="round" stroke-linecap="round"/>
<path d="M426.0 276.0 L436.0 280.0 L446.0 284.0 L456.0 286.0 L466.0 290.0" fill="none" stroke="#f2dd90" stroke-width="0.75" stroke-linejoin="round" stroke-linecap="round"/>
<path d="M358.5 170.6 L352.0 175.0 L344.0 180.0 L336.0 186.0 L330.0 193.0 L324.0 203.0 L318.0 213.0 L313.0 222.0 L311.5 227.5" fill="none" stroke="#f4c592" stroke-width="0.8" stroke-linejoin="round" stroke-linecap="round"/>
<path d="M303.7 157.0 L305.0 165.0 L306.0 175.0 L306.5 184.0 L307.0 191.9 L309.5 200.0 L312.0 208.0 L311.6 216.0 L311.0 222.0 L311.5 227.5" fill="none" stroke="#f4c592" stroke-width="0.8" stroke-linejoin="round" stroke-linecap="round"/>
<path d="M303.7 157.0 L308.0 163.0 L314.0 166.5 L321.0 166.0 L329.0 165.0 L338.0 166.6 L347.0 166.0 L353.0 168.0 L358.5 170.6" fill="none" stroke="#f4c592" stroke-width="0.8" stroke-linejoin="round" stroke-linecap="round"/>
<path d="M453.8 158.6 L458.0 163.0 L460.5 165.0 L463.0 171.0 L465.8 175.8 L474.0 179.0 L483.1 183.3 L490.0 189.0 L497.0 195.1 L505.1 198.9 L513.2 205.9 L521.8 212.4" fill="none" stroke="#f5b074" stroke-width="0.9" stroke-linejoin="round" stroke-linecap="round"/>
<path d="M428.0 274.0 L434.0 264.0 L440.0 254.8 L448.0 249.0 L457.0 244.0 L466.4 239.3 L473.0 237.0" fill="none" stroke="#f5b074" stroke-width="0.9" stroke-linejoin="round" stroke-linecap="round"/>
<path d="M391.8 154.5 L398.0 155.6 L404.0 157.0 L410.9 160.0" fill="none" stroke="#f5b074" stroke-width="0.9" stroke-linejoin="round" stroke-linecap="round"/>
<path d="M410.9 160.0 L417.0 156.6 L423.0 155.0" fill="none" stroke="#f5b074" stroke-width="0.9" stroke-linejoin="round" stroke-linecap="round"/>
<path d="M403.3 141.6 L406.0 146.0 L410.6 150.0 L410.9 160.0" fill="none" stroke="#f5b074" stroke-width="0.9" stroke-linejoin="round" stroke-linecap="round"/>
<path d="M410.9 160.0 L413.5 153.0 L415.4 146.0 L416.6 140.0" fill="none" stroke="#f5b074" stroke-width="0.9" stroke-linejoin="round" stroke-linecap="round"/>
<path d="M398.0 130.0 L401.0 137.0 L403.3 141.6 L399.0 147.0 L395.0 151.0 L391.8 154.5" fill="none" stroke="#f5b074" stroke-width="0.9" stroke-linejoin="round" stroke-linecap="round"/>
<path d="M378.5 283.5 L386.0 278.0 L392.0 272.0 L398.0 266.0 L404.0 258.0 L410.0 252.0 L416.0 246.0 L420.0 244.0" fill="none" stroke="#f5b074" stroke-width="0.9" stroke-linejoin="round" stroke-linecap="round"/>
<path d="M231.0 262.0 L238.0 258.0 L246.0 256.0 L254.0 258.0 L262.0 257.0 L270.0 259.0 L276.0 262.0 L282.0 258.0 L288.0 254.0 L296.0 252.0" fill="none" stroke="#f5b074" stroke-width="0.9" stroke-linejoin="round" stroke-linecap="round"/>
<path d="M276.0 262.0 L277.0 254.0 L279.0 246.0 L281.0 240.0 L280.0 232.0 L279.0 224.0 L280.0 216.0 L283.0 210.0 L286.0 204.0 L290.0 198.0 L293.0 193.0" fill="none" stroke="#f5b074" stroke-width="0.9" stroke-linejoin="round" stroke-linecap="round"/>
<path d="M279.0 224.0 L284.0 226.0 L290.0 226.5 L296.0 226.0 L302.0 225.0 L307.0 224.0 L311.5 227.5" fill="none" stroke="#f5b074" stroke-width="0.9" stroke-linejoin="round" stroke-linecap="round"/>
<path d="M296.0 226.0 L298.0 231.0 L299.0 235.0 L297.0 239.0" fill="none" stroke="#f5b074" stroke-width="0.9" stroke-linejoin="round" stroke-linecap="round"/>
<path d="M282.0 258.0 L286.0 252.0 L290.0 247.0 L293.0 242.0" fill="none" stroke="#f5b074" stroke-width="0.9" stroke-linejoin="round" stroke-linecap="round"/>
<path d="M276.0 262.0 L282.0 266.0 L288.0 270.0 L296.0 274.0 L304.0 277.0 L312.0 278.0 L320.0 278.0 L330.0 278.0 L340.0 279.0 L350.0 281.0 L360.0 282.0 L370.0 283.0 L378.5 283.5" fill="none" stroke="#f5b074" stroke-width="0.9" stroke-linejoin="round" stroke-linecap="round"/>
<path d="M296.0 252.0 L302.0 255.0 L308.0 260.0 L312.0 266.0 L310.0 272.0 L305.0 277.0" fill="none" stroke="#f5b074" stroke-width="0.9" stroke-linejoin="round" stroke-linecap="round"/>
<path d="M296.0 252.0 L304.0 250.0 L312.0 250.5 L318.0 253.0 L324.0 256.0 L330.0 258.0 L338.0 258.0 L346.0 256.0 L354.0 252.0 L360.0 249.0 L364.8 249.6" fill="none" stroke="#f5b074" stroke-width="0.9" stroke-linejoin="round" stroke-linecap="round"/>
<path d="M276.0 262.0 L274.0 270.0 L276.0 278.0 L280.0 284.0 L284.0 290.0" fill="none" stroke="#f5b074" stroke-width="0.9" stroke-linejoin="round" stroke-linecap="round"/>
<path d="M254.0 258.0 L256.0 266.0 L260.0 272.0 L266.0 276.0 L272.0 278.0 L276.0 278.0" fill="none" stroke="#f5b074" stroke-width="0.9" stroke-linejoin="round" stroke-linecap="round"/>
<path d="M231.0 272.0 L238.0 270.0 L246.0 271.0 L254.0 273.0 L260.0 272.0" fill="none" stroke="#f5b074" stroke-width="0.9" stroke-linejoin="round" stroke-linecap="round"/>
<path d="M231.0 280.0 L238.0 281.0 L246.0 280.0 L252.0 284.0 L256.0 290.0" fill="none" stroke="#f5b074" stroke-width="0.9" stroke-linejoin="round" stroke-linecap="round"/>
<path d="M238.0 258.0 L236.0 266.0 L238.0 274.0 L242.0 282.0 L244.0 290.0" fill="none" stroke="#f5b074" stroke-width="0.9" stroke-linejoin="round" stroke-linecap="round"/>
<path d="M246.0 256.0 L250.0 264.0 L254.0 273.0 L258.0 282.0 L262.0 290.0" fill="none" stroke="#f5b074" stroke-width="0.9" stroke-linejoin="round" stroke-linecap="round"/>
<path d="M288.0 270.0 L290.0 278.0 L294.0 284.0 L298.0 290.0" fill="none" stroke="#f5b074" stroke-width="0.9" stroke-linejoin="round" stroke-linecap="round"/>
<path d="M305.0 277.0 L308.0 283.0 L312.0 290.0" fill="none" stroke="#f5b074" stroke-width="0.9" stroke-linejoin="round" stroke-linecap="round"/>
<path d="M305.0 277.0 L300.0 283.0 L296.0 290.0" fill="none" stroke="#f5b074" stroke-width="0.9" stroke-linejoin="round" stroke-linecap="round"/>
<path d="M312.0 266.0 L318.0 268.0 L324.0 272.0 L330.0 278.0" fill="none" stroke="#f5b074" stroke-width="0.9" stroke-linejoin="round" stroke-linecap="round"/>
<path d="M330.0 258.0 L332.0 266.0 L334.0 272.0 L338.0 279.0" fill="none" stroke="#f5b074" stroke-width="0.9" stroke-linejoin="round" stroke-linecap="round"/>
<path d="M359.0 247.0 L359.0 254.0 L357.0 262.0 L355.0 270.0 L356.0 278.0 L360.0 282.0" fill="none" stroke="#f5b074" stroke-width="0.9" stroke-linejoin="round" stroke-linecap="round"/>
<path d="M364.8 249.6 L368.0 256.0 L372.0 262.0 L375.0 270.0 L376.0 277.0 L378.5 283.5" fill="none" stroke="#f5b074" stroke-width="0.9" stroke-linejoin="round" stroke-linecap="round"/>
<path d="M338.0 258.0 L344.0 264.0 L350.0 270.0 L356.0 278.0" fill="none" stroke="#f5b074" stroke-width="0.9" stroke-linejoin="round" stroke-linecap="round"/>
<path d="M378.5 283.5 L384.0 286.0 L392.0 288.0 L400.0 290.0" fill="none" stroke="#f5b074" stroke-width="0.9" stroke-linejoin="round" stroke-linecap="round"/>
<path d="M378.5 283.5 L377.0 290.0" fill="none" stroke="#f5b074" stroke-width="0.9" stroke-linejoin="round" stroke-linecap="round"/>
<path d="M378.5 283.5 L372.0 288.0 L368.0 290.0" fill="none" stroke="#f5b074" stroke-width="0.9" stroke-linejoin="round" stroke-linecap="round"/>
<path d="M340.0 279.0 L338.0 285.0 L339.0 290.0" fill="none" stroke="#f5b074" stroke-width="0.9" stroke-linejoin="round" stroke-linecap="round"/>
<path d="M320.0 278.0 L322.0 284.0 L326.0 290.0" fill="none" stroke="#f5b074" stroke-width="0.9" stroke-linejoin="round" stroke-linecap="round"/>
<path d="M354.0 252.0 L346.0 256.0 L340.0 262.0 L336.0 268.0 L334.0 272.0" fill="none" stroke="#f5b074" stroke-width="0.9" stroke-linejoin="round" stroke-linecap="round"/>
<path d="M310.0 243.9 L310.0 250.0" fill="none" stroke="#f5b074" stroke-width="0.9" stroke-linejoin="round" stroke-linecap="round"/>
<path d="M318.0 253.0 L316.0 262.0 L318.0 270.0 L320.0 278.0" fill="none" stroke="#f5b074" stroke-width="0.9" stroke-linejoin="round" stroke-linecap="round"/>
<path d="M264.0 250.0 L266.0 256.0 L270.0 259.0" fill="none" stroke="#f5b074" stroke-width="0.9" stroke-linejoin="round" stroke-linecap="round"/>
<path d="M350.0 281.0 L352.0 286.0 L352.0 290.0" fill="none" stroke="#f5b074" stroke-width="0.9" stroke-linejoin="round" stroke-linecap="round"/>
<path d="M231.0 266.0 L236.0 263.0 L242.0 262.0 L248.0 264.0 L254.0 266.0" fill="none" stroke="#f5b074" stroke-width="0.9" stroke-linejoin="round" stroke-linecap="round"/>
<path d="M234.0 256.0 L238.0 262.0 L242.0 268.0 L246.0 271.0" fill="none" stroke="#f5b074" stroke-width="0.9" stroke-linejoin="round" stroke-linecap="round"/>
<path d="M231.0 276.0 L236.0 276.0 L242.0 278.0 L248.0 276.0 L254.0 273.0" fill="none" stroke="#f5b074" stroke-width="0.9" stroke-linejoin="round" stroke-linecap="round"/>
<path d="M248.0 264.0 L246.0 271.0 L246.0 280.0" fill="none" stroke="#f5b074" stroke-width="0.9" stroke-linejoin="round" stroke-linecap="round"/>
<path d="M262.0 257.0 L262.0 264.0 L260.0 272.0" fill="none" stroke="#f5b074" stroke-width="0.9" stroke-linejoin="round" stroke-linecap="round"/>
<path d="M266.0 276.0 L268.0 284.0 L270.0 290.0" fill="none" stroke="#f5b074" stroke-width="0.9" stroke-linejoin="round" stroke-linecap="round"/>
<path d="M272.0 278.0 L278.0 274.0 L284.0 272.0 L288.0 270.0" fill="none" stroke="#f5b074" stroke-width="0.9" stroke-linejoin="round" stroke-linecap="round"/>
<path d="M242.0 250.5 L246.0 256.0" fill="none" stroke="#f5b074" stroke-width="0.9" stroke-linejoin="round" stroke-linecap="round"/>
<path d="M296.0 274.0 L298.0 266.0 L302.0 260.0 L302.0 255.0" fill="none" stroke="#f5b074" stroke-width="0.9" stroke-linejoin="round" stroke-linecap="round"/>
<path d="M312.0 278.0 L316.0 284.0 L318.0 290.0" fill="none" stroke="#f5b074" stroke-width="0.9" stroke-linejoin="round" stroke-linecap="round"/>
<path d="M330.0 278.0 L332.0 284.0 L336.0 290.0" fill="none" stroke="#f5b074" stroke-width="0.9" stroke-linejoin="round" stroke-linecap="round"/>
<path d="M340.0 262.0 L346.0 268.0 L350.0 274.0 L350.0 281.0" fill="none" stroke="#f5b074" stroke-width="0.9" stroke-linejoin="round" stroke-linecap="round"/>
<path d="M364.0 264.0 L358.0 270.0 L356.0 278.0" fill="none" stroke="#f5b074" stroke-width="0.9" stroke-linejoin="round" stroke-linecap="round"/>
<path d="M375.0 270.0 L382.0 272.0 L390.0 274.0 L398.0 272.0" fill="none" stroke="#f5b074" stroke-width="0.9" stroke-linejoin="round" stroke-linecap="round"/>
<path d="M370.0 283.0 L366.0 276.0 L364.0 270.0 L364.0 264.0 L364.8 258.0" fill="none" stroke="#f5b074" stroke-width="0.9" stroke-linejoin="round" stroke-linecap="round"/>
<text x="282.2" y="138.8" textLength="24.8" lengthAdjust="spacing" font-family="Liberation Sans, sans-serif" font-size="7.10" font-weight="700" fill="#2f2f2f" style="paint-order:stroke" stroke="#ffffff" stroke-width="0.70" stroke-linejoin="round" opacity="1">Norway</text>
<text x="272.5" y="218.2" textLength="29.6" lengthAdjust="spacing" font-family="Liberation Sans, sans-serif" font-size="7.00" font-weight="700" fill="#2f2f2f" style="paint-order:stroke" stroke="#ffffff" stroke-width="0.70" stroke-linejoin="round" opacity="1">Denmark</text>
<text x="410.3" y="181.0" textLength="20.5" lengthAdjust="spacing" font-family="Liberation Sans, sans-serif" font-size="6.00" font-weight="700" fill="#2f2f2f" style="paint-order:stroke" stroke="#ffffff" stroke-width="0.70" stroke-linejoin="round" opacity="1">Estonia</text>
<text x="406.6" y="209.8" textLength="16.4" lengthAdjust="spacing" font-family="Liberation Sans, sans-serif" font-size="6.00" font-weight="700" fill="#2f2f2f" style="paint-order:stroke" stroke="#ffffff" stroke-width="0.70" stroke-linejoin="round" opacity="1">Latvia</text>
<text x="394.9" y="233.0" textLength="25.5" lengthAdjust="spacing" font-family="Liberation Sans, sans-serif" font-size="6.00" font-weight="700" fill="#2f2f2f" style="paint-order:stroke" stroke="#ffffff" stroke-width="0.70" stroke-linejoin="round" opacity="1">Lithuania</text>
<text x="353.1" y="286.0" textLength="22.2" lengthAdjust="spacing" font-family="Liberation Sans, sans-serif" font-size="7.00" font-weight="700" fill="#2f2f2f" style="paint-order:stroke" stroke="#ffffff" stroke-width="0.70" stroke-linejoin="round" opacity="1">Poland</text>
<text x="433.8" y="261.8" textLength="26.2" lengthAdjust="spacing" font-family="Liberation Sans, sans-serif" font-size="7.00" font-weight="700" fill="#2f2f2f" style="paint-order:stroke" stroke="#ffffff" stroke-width="0.70" stroke-linejoin="round" opacity="1">Belarus</text>
<text x="525.0" y="210.5" textLength="21.5" lengthAdjust="spacing" font-family="Liberation Sans, sans-serif" font-size="6.00" font-weight="700" fill="#2f2f2f" style="paint-order:stroke" stroke="#ffffff" stroke-width="0.70" stroke-linejoin="round" opacity="1">Moscow</text>
<text x="227.6" y="269.8" textLength="29.3" lengthAdjust="spacing" font-family="Liberation Sans, sans-serif" font-size="5.90" font-weight="700" fill="#2f2f2f" style="paint-order:stroke" stroke="#ffffff" stroke-width="0.70" stroke-linejoin="round" opacity="1">etherlands</text>
<text x="261.2" y="292.2" textLength="29.5" lengthAdjust="spacing" font-family="Liberation Sans, sans-serif" font-size="7.00" font-weight="700" fill="#2f2f2f" style="paint-order:stroke" stroke="#ffffff" stroke-width="0.70" stroke-linejoin="round" opacity="1">Germany</text>
<text x="226.5" y="291.6" textLength="9.2" lengthAdjust="spacing" font-family="Liberation Sans, sans-serif" font-size="5.90" font-weight="700" fill="#2f2f2f" style="paint-order:stroke" stroke="#ffffff" stroke-width="0.70" stroke-linejoin="round" opacity="1">ium</text>
<text x="249.2" y="142.7" textLength="16.9" lengthAdjust="spacing" font-family="Liberation Sans, sans-serif" font-size="5.10" font-weight="400" fill="#444444" style="paint-order:stroke" stroke="#ffffff" stroke-width="0.70" stroke-linejoin="round" opacity="1">Bergen</text>
<circle cx="267.9" cy="144.5" r="0.95" fill="#222" stroke="#fff" stroke-width="0.3"/>
<text x="298.1" y="154.0" textLength="11.6" lengthAdjust="spacing" font-family="Liberation Sans, sans-serif" font-size="5.30" font-weight="400" fill="#444444" style="paint-order:stroke" stroke="#ffffff" stroke-width="0.70" stroke-linejoin="round" opacity="1">Oslo</text>
<circle cx="303.7" cy="157.4" r="1.75" fill="#fff" stroke="#333" stroke-width="0.5"/><circle cx="303.7" cy="157.4" r="1.05" fill="#222"/>
<text x="337.2" y="163.2" textLength="19.9" lengthAdjust="spacing" font-family="Liberation Sans, sans-serif" font-size="4.90" font-weight="400" fill="#444444" style="paint-order:stroke" stroke="#ffffff" stroke-width="0.70" stroke-linejoin="round" opacity="1">Västerås</text>
<circle cx="347.2" cy="165.8" r="0.85" fill="#222" stroke="#fff" stroke-width="0.3"/>
<text x="361.4" y="168.5" textLength="26.9" lengthAdjust="spacing" font-family="Liberation Sans, sans-serif" font-size="5.30" font-weight="400" fill="#444444" style="paint-order:stroke" stroke="#ffffff" stroke-width="0.70" stroke-linejoin="round" opacity="1">Stockholm</text>
<circle cx="358.5" cy="170.7" r="1.75" fill="#fff" stroke="#333" stroke-width="0.5"/><circle cx="358.5" cy="170.7" r="1.05" fill="#222"/>
<text x="294.3" y="188.9" textLength="26.7" lengthAdjust="spacing" font-family="Liberation Sans, sans-serif" font-size="4.90" font-weight="400" fill="#444444" style="paint-order:stroke" stroke="#ffffff" stroke-width="0.70" stroke-linejoin="round" opacity="1">Gothenburg</text>
<circle cx="307.1" cy="191.3" r="0.85" fill="#222" stroke="#fff" stroke-width="0.3"/>
<text x="385.6" y="151.7" textLength="12.9" lengthAdjust="spacing" font-family="Liberation Sans, sans-serif" font-size="5.30" font-weight="400" fill="#444444" style="paint-order:stroke" stroke="#ffffff" stroke-width="0.70" stroke-linejoin="round" opacity="1">Turku</text>
<circle cx="392.0" cy="154.4" r="0.95" fill="#222" stroke="#fff" stroke-width="0.3"/>
<text x="456.7" y="164.8" textLength="12.4" lengthAdjust="spacing" font-family="Liberation Sans, sans-serif" font-size="5.30" font-weight="400" fill="#444444" style="paint-order:stroke" stroke="#ffffff" stroke-width="0.70" stroke-linejoin="round" opacity="1">Saint</text>
<text x="456.7" y="171.6" textLength="28.0" lengthAdjust="spacing" font-family="Liberation Sans, sans-serif" font-size="5.30" font-weight="400" fill="#444444" style="paint-order:stroke" stroke="#ffffff" stroke-width="0.70" stroke-linejoin="round" opacity="1">Petersburg</text>
<circle cx="453.8" cy="158.7" r="1.05" fill="#222" stroke="#fff" stroke-width="0.3"/>
<text x="515.3" y="155.9" textLength="17.8" lengthAdjust="spacing" font-family="Liberation Sans, sans-serif" font-size="4.90" font-weight="400" fill="#444444" style="paint-order:stroke" stroke="#ffffff" stroke-width="0.70" stroke-linejoin="round" opacity="1">Vologda</text>
<circle cx="524.5" cy="158.6" r="0.85" fill="#222" stroke="#fff" stroke-width="0.3"/>
<text x="521.3" y="178.6" textLength="19.9" lengthAdjust="spacing" font-family="Liberation Sans, sans-serif" font-size="4.90" font-weight="400" fill="#444444" style="paint-order:stroke" stroke="#ffffff" stroke-width="0.70" stroke-linejoin="round" opacity="1">Yaroslavl</text>
<circle cx="531.3" cy="181.4" r="0.85" fill="#222" stroke="#fff" stroke-width="0.3"/>
<text x="500.8" y="196.1" textLength="9.2" lengthAdjust="spacing" font-family="Liberation Sans, sans-serif" font-size="5.30" font-weight="400" fill="#444444" style="paint-order:stroke" stroke="#ffffff" stroke-width="0.70" stroke-linejoin="round" opacity="1">Tver</text>
<circle cx="505.1" cy="199.0" r="0.85" fill="#222" stroke="#fff" stroke-width="0.3"/>
<circle cx="521.8" cy="212.4" r="1.85" fill="#fff" stroke="#333" stroke-width="0.5"/><circle cx="521.8" cy="212.4" r="1.15" fill="#222"/>
<text x="535.7" y="266.5" textLength="10.7" lengthAdjust="spacing" font-family="Liberation Sans, sans-serif" font-size="5.30" font-weight="400" fill="#888888" style="paint-order:stroke" stroke="#ffffff" stroke-width="0.70" stroke-linejoin="round" opacity="1">Voro</text>
<text x="225.8" y="196.8" textLength="20.3" lengthAdjust="spacing" font-family="Liberation Sans, sans-serif" font-size="6.60" font-weight="700" fill="#62c4f3" style="font-style:italic;paint-order:stroke" stroke="#97dbfd" stroke-width="0.00" stroke-linejoin="round" opacity="0.9">North</text>
<text x="231.3" y="205.9" textLength="11.4" lengthAdjust="spacing" font-family="Liberation Sans, sans-serif" font-size="6.60" font-weight="700" fill="#62c4f3" style="font-style:italic;paint-order:stroke" stroke="#97dbfd" stroke-width="0.00" stroke-linejoin="round" opacity="0.9">Sea</text>
<circle cx="417.3" cy="124.9" r="9.9" fill="#7030a0"/>
<text x="417.5" y="128.7" font-family="Liberation Sans, sans-serif" font-size="10.4" fill="#fff" text-anchor="middle" letter-spacing="-0.5">15</text>
<path d="M405.20 155.40 A5.70 5.70 0 1 1 416.60 155.40 C416.60 159.60 413.30 162.40 410.90 165.40 C408.50 162.40 405.20 159.60 405.20 155.40 Z" fill="#7030a0"/><circle cx="410.90" cy="155.30" r="3.75" fill="#fff"/><circle cx="410.90" cy="155.30" r="0.55" fill="#444"/>
<path d="M299.60 272.50 A5.70 5.70 0 1 1 311.00 272.50 C311.00 276.70 307.70 279.50 305.30 282.50 C302.90 279.50 299.60 276.70 299.60 272.50 Z" fill="#7030a0"/><circle cx="305.30" cy="272.40" r="3.75" fill="#fff"/><circle cx="305.30" cy="272.40" r="0.55" fill="#444"/>
<g opacity="0.9"><circle cx="240.3" cy="280.3" r="4.6" fill="#fff" stroke="#9aa" stroke-width="0.9" stroke-opacity="0.6"/><circle cx="240.5" cy="280.1" r="2.6" fill="none" stroke="#9a9a9a" stroke-width="0.9" stroke-opacity="0.7"/><text x="247.2" y="283.4" font-family="Liberation Sans, sans-serif" font-size="8.4" font-weight="700" fill="#fff" stroke="#777" stroke-opacity="0.45" stroke-width="1.1" style="paint-order:stroke" letter-spacing="-0.1">mapbox</text></g>
<circle cx="534" cy="277.7" r="5.6" fill="#fff"/><circle cx="534" cy="277.7" r="3.9" fill="#111"/><rect x="533.4" y="276.9" width="1.2" height="3.1" fill="#fff"/><circle cx="534" cy="275.6" r="0.7" fill="#fff"/>
</svg></div>
<div style="position:absolute;left:421.88px;top:187.5px;width:613.12px;height:11.34px;background:#fff;"></div>
<div style="position:absolute;left:421.88px;top:543.19px;width:613.12px;height:11.81px;background:#fff;"></div>
<div style="position:absolute;left:421.88px;top:187.5px;width:11.34px;height:367.5px;background:#fff;"></div>
<div style="position:absolute;left:1023px;top:187.5px;width:12px;height:367.5px;background:#fff;"></div>
<svg style="position:absolute;left:1083px;top:160.5px" width="8.25" height="13.88" viewBox="0 0 4.4 7.4"><rect x="0.08" y="0.08" width="1.45" height="1.45" rx="0.35" fill="#2f3140"/><rect x="0.08" y="2.98" width="1.45" height="1.45" rx="0.35" fill="#2f3140"/><rect x="0.08" y="5.88" width="1.45" height="1.45" rx="0.35" fill="#2f3140"/><rect x="2.88" y="0.08" width="1.45" height="1.45" rx="0.35" fill="#2f3140"/><rect x="2.88" y="2.98" width="1.45" height="1.45" rx="0.35" fill="#2f3140"/><rect x="2.88" y="5.88" width="1.45" height="1.45" rx="0.35" fill="#2f3140"/></svg>
<div class="t" style="left:1103.06px;top:155.19px;font-size:19.2px;line-height:26px;font-weight:700;color:#131427;letter-spacing:-0.436px;">Monthly cost statistics</div>
<svg style="position:absolute;left:1665px;top:160.31px" width="3.75" height="13.88" viewBox="0 0 2 7.4"><circle cx="1" cy="1.00" r="0.85" fill="#2f3140"/><circle cx="1" cy="3.70" r="0.85" fill="#2f3140"/><circle cx="1" cy="6.40" r="0.85" fill="#2f3140"/></svg>
<svg style="position:absolute;left:1670.62px;top:558.38px" width="13.12" height="11.25" viewBox="0 0 7 6" fill="none" stroke="#222a48" stroke-width="1.15" stroke-linecap="round"><path d="M0.5 5.2 L6.4 0.5 M3.6 5.6 L6.4 3.3"/></svg>
<svg style="position:absolute;left:1068.75px;top:187.5px" width="618.75" height="346.88" viewBox="570 100 330 185"><rect x="601" y="239.07" width="289.2" height="0.6" fill="#e1e2e8"/><rect x="601" y="212.44" width="289.2" height="0.6" fill="#e1e2e8"/><rect x="601" y="185.81" width="289.2" height="0.6" fill="#e1e2e8"/><rect x="601" y="159.18" width="289.2" height="0.6" fill="#e1e2e8"/><rect x="601" y="132.55" width="289.2" height="0.6" fill="#e1e2e8"/><rect x="601" y="105.92" width="289.2" height="0.6" fill="#e1e2e8"/><rect x="601" y="265.60" width="289.2" height="0.8" fill="#cfd0d8"/><rect x="615.23" y="266.40" width="0.55" height="3.6" fill="#dfe0e6"/><rect x="606.30" y="123.68" width="18.40" height="54.94" rx="1.90" fill="#df7a41"/><rect x="606.30" y="179.98" width="18.40" height="42.64" rx="1.90" fill="#8153cc"/><rect x="606.30" y="224.38" width="18.40" height="15.14" rx="1.90" fill="#2ca08f"/><rect x="606.30" y="241.58" width="18.40" height="19.04" rx="1.90" fill="#c43b66"/><rect x="606.30" y="262.18" width="18.40" height="3.14" rx="1.57" fill="#6286e6"/><rect x="639.23" y="266.40" width="0.55" height="3.6" fill="#dfe0e6"/><rect x="630.30" y="140.88" width="18.40" height="31.84" rx="1.90" fill="#df7a41"/><rect x="630.30" y="174.18" width="18.40" height="23.54" rx="1.90" fill="#8153cc"/><rect x="630.30" y="199.38" width="18.40" height="50.54" rx="1.90" fill="#2ca08f"/><rect x="630.30" y="251.78" width="18.40" height="10.34" rx="1.90" fill="#c43b66"/><rect x="630.30" y="263.78" width="18.40" height="1.64" rx="0.82" fill="#6286e6"/><rect x="663.23" y="266.40" width="0.55" height="3.6" fill="#dfe0e6"/><rect x="654.30" y="192.38" width="18.40" height="15.84" rx="1.90" fill="#df7a41"/><rect x="654.30" y="210.08" width="18.40" height="13.04" rx="1.90" fill="#8153cc"/><rect x="654.30" y="225.18" width="18.40" height="29.44" rx="1.90" fill="#2ca08f"/><rect x="654.30" y="256.48" width="18.40" height="6.44" rx="1.90" fill="#c43b66"/><rect x="654.30" y="263.98" width="18.40" height="1.54" rx="0.77" fill="#6286e6"/><rect x="687.23" y="266.40" width="0.55" height="3.6" fill="#dfe0e6"/><rect x="678.30" y="171.48" width="18.40" height="37.84" rx="1.90" fill="#df7a41"/><rect x="678.30" y="211.13" width="18.40" height="22.09" rx="1.90" fill="#8153cc"/><rect x="678.30" y="234.88" width="18.40" height="8.99" rx="1.90" fill="#2ca08f"/><rect x="678.30" y="245.78" width="18.40" height="16.04" rx="1.90" fill="#c43b66"/><rect x="678.30" y="263.78" width="18.40" height="1.64" rx="0.82" fill="#6286e6"/><rect x="711.23" y="266.40" width="0.55" height="3.6" fill="#dfe0e6"/><rect x="702.30" y="207.18" width="18.40" height="20.64" rx="1.90" fill="#df7a41"/><rect x="702.30" y="229.88" width="18.40" height="17.44" rx="1.90" fill="#8153cc"/><rect x="702.30" y="249.08" width="18.40" height="4.94" rx="1.90" fill="#2ca08f"/><rect x="702.30" y="255.98" width="18.40" height="6.94" rx="1.90" fill="#c43b66"/><rect x="702.30" y="264.38" width="18.40" height="1.14" rx="0.57" fill="#6286e6" opacity="0.75"/><rect x="735.23" y="266.40" width="0.55" height="3.6" fill="#dfe0e6"/><rect x="726.30" y="225.68" width="18.40" height="13.84" rx="1.90" fill="#df7a41"/><rect x="726.30" y="241.58" width="18.40" height="12.74" rx="1.90" fill="#8153cc"/><rect x="726.30" y="256.13" width="18.40" height="2.39" rx="1.19" fill="#2ca08f"/><rect x="726.30" y="260.08" width="18.40" height="3.64" rx="1.82" fill="#c43b66"/><rect x="726.30" y="264.58" width="18.40" height="0.94" rx="0.47" fill="#6286e6" opacity="0.75"/><rect x="759.23" y="266.40" width="0.55" height="3.6" fill="#dfe0e6"/><rect x="750.30" y="153.88" width="18.40" height="42.39" rx="1.90" fill="#df7a41"/><rect x="750.30" y="198.18" width="18.40" height="34.74" rx="1.90" fill="#8153cc"/><rect x="750.30" y="234.88" width="18.40" height="10.84" rx="1.90" fill="#2ca08f"/><rect x="750.30" y="247.58" width="18.40" height="13.79" rx="1.90" fill="#c43b66"/><rect x="750.30" y="263.18" width="18.40" height="2.24" rx="1.12" fill="#6286e6"/><rect x="783.23" y="266.40" width="0.55" height="3.6" fill="#dfe0e6"/><rect x="774.30" y="205.48" width="18.40" height="22.64" rx="1.90" fill="#df7a41"/><rect x="774.30" y="229.88" width="18.40" height="18.64" rx="1.90" fill="#8153cc"/><rect x="774.30" y="250.18" width="18.40" height="3.84" rx="1.90" fill="#2ca08f"/><rect x="774.30" y="255.98" width="18.40" height="6.94" rx="1.90" fill="#c43b66"/><rect x="774.30" y="263.98" width="18.40" height="1.54" rx="0.77" fill="#6286e6"/><rect x="807.23" y="266.40" width="0.55" height="3.6" fill="#dfe0e6"/><rect x="798.30" y="188.93" width="18.40" height="27.59" rx="1.90" fill="#df7a41"/><rect x="798.30" y="218.18" width="18.40" height="22.84" rx="1.90" fill="#8153cc"/><rect x="798.30" y="243.18" width="18.40" height="6.14" rx="1.90" fill="#2ca08f"/><rect x="798.30" y="250.98" width="18.40" height="11.44" rx="1.90" fill="#c43b66"/><rect x="798.30" y="263.98" width="18.40" height="1.54" rx="0.77" fill="#6286e6"/><rect x="831.23" y="266.40" width="0.55" height="3.6" fill="#dfe0e6"/><rect x="822.30" y="177.28" width="18.40" height="35.64" rx="1.90" fill="#df7a41"/><rect x="822.30" y="214.68" width="18.40" height="25.14" rx="1.90" fill="#8153cc"/><rect x="822.30" y="241.88" width="18.40" height="7.44" rx="1.90" fill="#2ca08f"/><rect x="822.30" y="250.98" width="18.40" height="10.84" rx="1.90" fill="#c43b66"/><rect x="822.30" y="263.78" width="18.40" height="1.64" rx="0.82" fill="#6286e6"/><rect x="855.23" y="266.40" width="0.55" height="3.6" fill="#dfe0e6"/><rect x="846.30" y="165.08" width="18.40" height="32.59" rx="1.90" fill="#df7a41"/><rect x="846.30" y="199.58" width="18.40" height="38.34" rx="1.90" fill="#8153cc"/><rect x="846.30" y="239.68" width="18.40" height="9.64" rx="1.90" fill="#2ca08f"/><rect x="846.30" y="250.98" width="18.40" height="10.39" rx="1.90" fill="#c43b66"/><rect x="846.30" y="263.18" width="18.40" height="2.24" rx="1.12" fill="#6286e6"/><rect x="879.23" y="266.40" width="0.55" height="3.6" fill="#dfe0e6"/><rect x="870.30" y="249.68" width="18.40" height="4.64" rx="1.90" fill="#df7a41"/><rect x="870.30" y="256.48" width="18.40" height="4.14" rx="1.90" fill="#8153cc"/><rect x="870.30" y="261.58" width="18.40" height="2.14" rx="1.07" fill="#2ca08f"/><rect x="870.30" y="263.78" width="18.40" height="1.84" rx="0.92" fill="#c43b66"/></svg>
<div style="position:absolute;left:1078.12px;top:198.75px;width:43.69px;height:11.25px;overflow:hidden"><div class="t" style="right:0;top:-8px;font-size:12px;line-height:16px;color:#5b5d6b">30000</div></div>
<div class="t" style="right:798.19px;top:490.94px;font-size:12px;line-height:16px;font-weight:400;color:#5b5d6b;">0</div>
<div class="t" style="right:798.19px;top:441.01px;font-size:12px;line-height:16px;font-weight:400;color:#5b5d6b;">5000</div>
<div class="t" style="right:798.19px;top:391.07px;font-size:12px;line-height:16px;font-weight:400;color:#5b5d6b;">10000</div>
<div class="t" style="right:798.19px;top:341.14px;font-size:12px;line-height:16px;font-weight:400;color:#5b5d6b;">15000</div>
<div class="t" style="right:798.19px;top:291.21px;font-size:12px;line-height:16px;font-weight:400;color:#5b5d6b;">20000</div>
<div class="t" style="right:798.19px;top:241.28px;font-size:12px;line-height:16px;font-weight:400;color:#5b5d6b;">25000</div>
<div class="t" style="left:1154.06px;transform:translateX(-50%);top:507.25px;font-size:12px;line-height:16px;font-weight:400;color:#5b5d6b;letter-spacing:-0.2px;">Feb</div>
<div class="t" style="left:1199.06px;transform:translateX(-50%);top:507.25px;font-size:12px;line-height:16px;font-weight:400;color:#5b5d6b;letter-spacing:-0.2px;">Mar</div>
<div class="t" style="left:1244.06px;transform:translateX(-50%);top:507.25px;font-size:12px;line-height:16px;font-weight:400;color:#5b5d6b;letter-spacing:-0.2px;">Apr</div>
<div class="t" style="left:1289.06px;transform:translateX(-50%);top:507.25px;font-size:12px;line-height:16px;font-weight:400;color:#5b5d6b;letter-spacing:-0.2px;">May</div>
<div class="t" style="left:1334.06px;transform:translateX(-50%);top:507.25px;font-size:12px;line-height:16px;font-weight:400;color:#5b5d6b;letter-spacing:-0.2px;">Jun</div>
<div class="t" style="left:1379.06px;transform:translateX(-50%);top:507.25px;font-size:12px;line-height:16px;font-weight:400;color:#5b5d6b;letter-spacing:-0.2px;">Jul</div>
<div class="t" style="left:1424.06px;transform:translateX(-50%);top:507.25px;font-size:12px;line-height:16px;font-weight:400;color:#5b5d6b;letter-spacing:-0.2px;">Aug</div>
<div class="t" style="left:1469.06px;transform:translateX(-50%);top:507.25px;font-size:12px;line-height:16px;font-weight:400;color:#5b5d6b;letter-spacing:-0.2px;">Sept</div>
<div class="t" style="left:1514.06px;transform:translateX(-50%);top:507.25px;font-size:12px;line-height:16px;font-weight:400;color:#5b5d6b;letter-spacing:-0.2px;">Oct</div>
<div class="t" style="left:1559.06px;transform:translateX(-50%);top:507.25px;font-size:12px;line-height:16px;font-weight:400;color:#5b5d6b;letter-spacing:-0.2px;">Nov</div>
<div class="t" style="left:1604.06px;transform:translateX(-50%);top:507.25px;font-size:12px;line-height:16px;font-weight:400;color:#5b5d6b;letter-spacing:-0.2px;">Dec</div>
<div class="t" style="left:1649.06px;transform:translateX(-50%);top:507.25px;font-size:12px;line-height:16px;font-weight:400;color:#5b5d6b;letter-spacing:-0.2px;">Jan</div>
<div style="position:absolute;left:1083px;top:546.75px;width:13.5px;height:13.5px;background:#6286e6;border-radius:1.5px;"></div>
<div class="t" style="left:1100.81px;top:543.00px;font-size:14px;line-height:18px;font-weight:400;color:#2e2f3d;letter-spacing:-1.680px;">MOT</div>
<div style="position:absolute;left:1147.5px;top:546.75px;width:13.5px;height:13.5px;background:#c43b66;border-radius:1.5px;"></div>
<div class="t" style="left:1164.56px;top:543.00px;font-size:14px;line-height:18px;font-weight:400;color:#2e2f3d;letter-spacing:-0.162px;">Insurance</div>
<div style="position:absolute;left:1242.56px;top:546.75px;width:13.5px;height:13.5px;background:#2ca08f;border-radius:1.5px;"></div>
<div class="t" style="left:1260px;top:543.00px;font-size:14px;line-height:18px;font-weight:400;color:#2e2f3d;letter-spacing:-0.578px;">Fuel</div>
<div style="position:absolute;left:1302.56px;top:546.75px;width:13.5px;height:13.5px;background:#8153cc;border-radius:1.5px;"></div>
<div class="t" style="left:1320.38px;top:543.00px;font-size:14px;line-height:18px;font-weight:400;color:#2e2f3d;letter-spacing:0.078px;">Parts</div>
<div style="position:absolute;left:1369.5px;top:546.75px;width:13.5px;height:13.5px;background:#df7a41;border-radius:1.5px;"></div>
<div class="t" style="left:1387.12px;top:543.00px;font-size:14px;line-height:18px;font-weight:400;color:#2e2f3d;letter-spacing:0.083px;">Maintenance</div>
<svg style="position:absolute;left:432.94px;top:624.56px" width="8.25" height="13.88" viewBox="0 0 4.4 7.4"><rect x="0.08" y="0.08" width="1.45" height="1.45" rx="0.35" fill="#2f3140"/><rect x="0.08" y="2.98" width="1.45" height="1.45" rx="0.35" fill="#2f3140"/><rect x="0.08" y="5.88" width="1.45" height="1.45" rx="0.35" fill="#2f3140"/><rect x="2.88" y="0.08" width="1.45" height="1.45" rx="0.35" fill="#2f3140"/><rect x="2.88" y="2.98" width="1.45" height="1.45" rx="0.35" fill="#2f3140"/><rect x="2.88" y="5.88" width="1.45" height="1.45" rx="0.35" fill="#2f3140"/></svg>
<div class="t" style="left:452.81px;top:619.25px;font-size:19.2px;line-height:26px;font-weight:700;color:#131427;letter-spacing:-0.534px;">Equipment list</div>
<svg style="position:absolute;left:1014.75px;top:624.38px" width="3.75" height="13.88" viewBox="0 0 2 7.4"><circle cx="1" cy="1.00" r="0.85" fill="#2f3140"/><circle cx="1" cy="3.70" r="0.85" fill="#2f3140"/><circle cx="1" cy="6.40" r="0.85" fill="#2f3140"/></svg>
<svg style="position:absolute;left:1020px;top:904.88px" width="13.12" height="11.25" viewBox="0 0 7 6" fill="none" stroke="#222a48" stroke-width="1.15" stroke-linecap="round"><path d="M0.5 5.2 L6.4 0.5 M3.6 5.6 L6.4 3.3"/></svg>
<div class="t" style="left:434.81px;top:671.06px;font-size:14px;line-height:18px;font-weight:700;color:#4b4d5c;letter-spacing:-0.839px;">Name</div>
<svg style="position:absolute;left:494.34px;top:676.5px" width="11.06" height="8.81" viewBox="0 0 10 8" fill="none" stroke="#3b3d4d" stroke-width="1.6" stroke-linejoin="round"><path d="M1 1 L9 1 L5 7 Z"/></svg>
<div style="position:absolute;left:518.25px;top:671.81px;width:1.13px;height:17.25px;background:#dfe0e6;"></div>
<div class="t" style="left:540.56px;top:671.06px;font-size:14px;line-height:18px;font-weight:700;color:#4b4d5c;letter-spacing:-0.547px;">Type</div>
<svg style="position:absolute;left:639.28px;top:676.5px" width="11.06" height="8.81" viewBox="0 0 10 8" fill="none" stroke="#3b3d4d" stroke-width="1.6" stroke-linejoin="round"><path d="M1 1 L9 1 L5 7 Z"/></svg>
<div style="position:absolute;left:663px;top:671.81px;width:1.13px;height:17.25px;background:#dfe0e6;"></div>
<div class="t" style="left:685.5px;top:671.06px;font-size:14px;line-height:18px;font-weight:700;color:#4b4d5c;letter-spacing:-0.316px;">Model</div>
<svg style="position:absolute;left:822.28px;top:676.5px" width="11.06" height="8.81" viewBox="0 0 10 8" fill="none" stroke="#3b3d4d" stroke-width="1.6" stroke-linejoin="round"><path d="M1 1 L9 1 L5 7 Z"/></svg>
<div style="position:absolute;left:846.38px;top:671.81px;width:1.13px;height:17.25px;background:#dfe0e6;"></div>
<div class="t" style="left:868.12px;top:671.06px;font-size:14px;line-height:18px;font-weight:700;color:#15162a;letter-spacing:-0.450px;">Last active</div>
<svg style="position:absolute;left:1003.22px;top:676.88px" width="11.81" height="8.25" viewBox="0 0 10 10" preserveAspectRatio="none"><path d="M0 0 L10 0 L5 10 Z" fill="#111222"/></svg>
<div style="position:absolute;left:433.12px;top:699.84px;width:589.13px;height:1.31px;background:#dcdde4;"></div>
<div class="t" style="left:434.81px;top:711.19px;font-size:14px;line-height:18px;font-weight:400;color:#7c3fa9;letter-spacing:-0.635px;text-decoration:underline;text-decoration-thickness:1.2px;text-underline-offset:2px;">VH-1</div>
<div class="t" style="left:540.56px;top:711.19px;font-size:14px;line-height:18px;font-weight:400;color:#2a2b38;letter-spacing:-0.117px;">Passenger car</div>
<div class="t" style="left:685.5px;top:711.19px;font-size:14px;line-height:18px;font-weight:400;color:#2a2b38;letter-spacing:-0.113px;">Volvo v60</div>
<div class="t" style="left:868.12px;top:711.19px;font-size:14px;line-height:18px;font-weight:400;color:#2a2b38;letter-spacing:0.128px;">20/01/2026, 15:13</div>
<div style="position:absolute;left:433.12px;top:738.98px;width:589.13px;height:1.03px;background:#e6e7ec;"></div>
<div class="t" style="left:434.81px;top:750.19px;font-size:14px;line-height:18px;font-weight:400;color:#7c3fa9;letter-spacing:-0.224px;text-decoration:underline;text-decoration-thickness:1.2px;text-underline-offset:2px;">JYL-007</div>
<div class="t" style="left:540.56px;top:750.19px;font-size:14px;line-height:18px;font-weight:400;color:#2a2b38;letter-spacing:-0.117px;">Passenger car</div>
<div class="t" style="left:868.12px;top:750.19px;font-size:14px;line-height:18px;font-weight:400;color:#2a2b38;letter-spacing:0.128px;">20/01/2026, 13:48</div>
<div style="position:absolute;left:433.12px;top:777.98px;width:589.13px;height:1.03px;background:#e6e7ec;"></div>
<div class="t" style="left:434.81px;top:789.19px;font-size:14px;line-height:18px;font-weight:400;color:#7c3fa9;letter-spacing:-0.224px;text-decoration:underline;text-decoration-thickness:1.2px;text-underline-offset:2px;">JYL-006</div>
<div class="t" style="left:540.56px;top:789.19px;font-size:14px;line-height:18px;font-weight:400;color:#2a2b38;letter-spacing:-0.117px;">Passenger car</div>
<div class="t" style="left:868.12px;top:789.19px;font-size:14px;line-height:18px;font-weight:400;color:#2a2b38;letter-spacing:0.128px;">12/01/2026, 17:37</div>
<div style="position:absolute;left:433.12px;top:816.98px;width:589.13px;height:1.03px;background:#e6e7ec;"></div>
<div class="t" style="left:434.81px;top:828.19px;font-size:14px;line-height:18px;font-weight:400;color:#7c3fa9;letter-spacing:-0.643px;text-decoration:underline;text-decoration-thickness:1.2px;text-underline-offset:2px;">NGG-474</div>
<div class="t" style="left:540.56px;top:828.19px;font-size:14px;line-height:18px;font-weight:400;color:#2a2b38;letter-spacing:-0.117px;">Passenger car</div>
<div class="t" style="left:685.5px;top:828.19px;font-size:14px;line-height:18px;font-weight:400;color:#2a2b38;letter-spacing:-0.088px;">Nissan Primera P12</div>
<div class="t" style="left:868.12px;top:828.19px;font-size:14px;line-height:18px;font-weight:400;color:#2a2b38;letter-spacing:0.128px;">04/12/2025, 18:46</div>
<div style="position:absolute;left:433.12px;top:855.98px;width:589.13px;height:1.03px;background:#e6e7ec;"></div>
<div class="t" style="left:434.81px;top:867.19px;font-size:14px;line-height:18px;font-weight:400;color:#7c3fa9;letter-spacing:-0.224px;text-decoration:underline;text-decoration-thickness:1.2px;text-underline-offset:2px;">JYL-003</div>
<div class="t" style="left:540.56px;top:867.19px;font-size:14px;line-height:18px;font-weight:400;color:#2a2b38;letter-spacing:-0.117px;">Passenger car</div>
<div class="t" style="left:868.12px;top:867.19px;font-size:14px;line-height:18px;font-weight:400;color:#2a2b38;letter-spacing:0.193px;">27/11/2025, 17:17</div>
<svg style="position:absolute;left:1083px;top:624.56px" width="8.25" height="13.88" viewBox="0 0 4.4 7.4"><rect x="0.08" y="0.08" width="1.45" height="1.45" rx="0.35" fill="#2f3140"/><rect x="0.08" y="2.98" width="1.45" height="1.45" rx="0.35" fill="#2f3140"/><rect x="0.08" y="5.88" width="1.45" height="1.45" rx="0.35" fill="#2f3140"/><rect x="2.88" y="0.08" width="1.45" height="1.45" rx="0.35" fill="#2f3140"/><rect x="2.88" y="2.98" width="1.45" height="1.45" rx="0.35" fill="#2f3140"/><rect x="2.88" y="5.88" width="1.45" height="1.45" rx="0.35" fill="#2f3140"/></svg>
<div class="t" style="left:1103.06px;top:619.25px;font-size:19.2px;line-height:26px;font-weight:700;color:#131427;letter-spacing:-0.526px;">Equipment maintenance due list</div>
<svg style="position:absolute;left:1665px;top:624.38px" width="3.75" height="13.88" viewBox="0 0 2 7.4"><circle cx="1" cy="1.00" r="0.85" fill="#2f3140"/><circle cx="1" cy="3.70" r="0.85" fill="#2f3140"/><circle cx="1" cy="6.40" r="0.85" fill="#2f3140"/></svg>
<svg style="position:absolute;left:1670.62px;top:1021.5px" width="13.12" height="11.25" viewBox="0 0 7 6" fill="none" stroke="#222a48" stroke-width="1.15" stroke-linecap="round"><path d="M0.5 5.2 L6.4 0.5 M3.6 5.6 L6.4 3.3"/></svg>
<div class="t" style="left:1103.06px;top:645.00px;font-size:14px;line-height:18px;font-weight:400;color:#646676;letter-spacing:-0.016px;">Show a list of equipment with maintenance due in 30 days</div>
<svg style="position:absolute;left:1379.25px;top:696.94px" width="9.38" height="15" viewBox="0 0 5 8" fill="none" stroke="#7b7d8c" stroke-width="0.9" stroke-linecap="round" stroke-linejoin="round"><path d="M4.3 0.6 L0.8 4 L4.3 7.4"/></svg>
<svg style="position:absolute;left:1657.5px;top:696.94px" width="9.38" height="15" viewBox="0 0 5 8" fill="none" stroke="#2f3142" stroke-width="1" stroke-linecap="round" stroke-linejoin="round"><path d="M0.7 0.6 L4.2 4 L0.7 7.4"/></svg>
<div class="t" style="left:1409.81px;transform:translateX(-50%);top:695.44px;font-size:14px;line-height:18px;font-weight:700;color:#15162a;">1</div>
<div class="t" style="left:1437.84px;transform:translateX(-50%);top:695.44px;font-size:14px;line-height:18px;font-weight:400;color:#6b6d7c;">2</div>
<div class="t" style="left:1465.88px;transform:translateX(-50%);top:695.44px;font-size:14px;line-height:18px;font-weight:400;color:#6b6d7c;">3</div>
<div class="t" style="left:1493.91px;transform:translateX(-50%);top:695.44px;font-size:14px;line-height:18px;font-weight:400;color:#6b6d7c;">4</div>
<div class="t" style="left:1521.94px;transform:translateX(-50%);top:695.44px;font-size:14px;line-height:18px;font-weight:400;color:#6b6d7c;">5</div>
<div class="t" style="left:1549.97px;transform:translateX(-50%);top:695.44px;font-size:14px;line-height:18px;font-weight:400;color:#6b6d7c;">6</div>
<div class="t" style="left:1578px;transform:translateX(-50%);top:695.44px;font-size:14px;line-height:18px;font-weight:400;color:#6b6d7c;">7</div>
<div class="t" style="left:1606.03px;transform:translateX(-50%);top:695.44px;font-size:14px;line-height:18px;font-weight:400;color:#6b6d7c;">8</div>
<div class="t" style="left:1634.06px;transform:translateX(-50%);top:695.44px;font-size:14px;line-height:18px;font-weight:400;color:#6b6d7c;">9</div>
<div class="t" style="left:1085.25px;top:737.62px;font-size:14px;line-height:18px;font-weight:700;color:#4b4d5c;letter-spacing:-0.839px;">Name</div>
<svg style="position:absolute;left:1142.53px;top:743.06px" width="11.06" height="8.81" viewBox="0 0 10 8" fill="none" stroke="#3b3d4d" stroke-width="1.6" stroke-linejoin="round"><path d="M1 1 L9 1 L5 7 Z"/></svg>
<div style="position:absolute;left:1166.62px;top:738px;width:1.12px;height:17.62px;background:#dfe0e6;"></div>
<div class="t" style="left:1188.75px;top:737.62px;font-size:14px;line-height:18px;font-weight:700;color:#4b4d5c;letter-spacing:-0.547px;">Type</div>
<svg style="position:absolute;left:1300.97px;top:743.06px" width="11.06" height="8.81" viewBox="0 0 10 8" fill="none" stroke="#3b3d4d" stroke-width="1.6" stroke-linejoin="round"><path d="M1 1 L9 1 L5 7 Z"/></svg>
<div style="position:absolute;left:1325.44px;top:738px;width:1.12px;height:17.62px;background:#dfe0e6;"></div>
<div class="t" style="left:1347.19px;top:737.62px;font-size:14px;line-height:18px;font-weight:700;color:#15162a;letter-spacing:-0.414px;">Next maintenance</div>
<svg style="position:absolute;left:1480.97px;top:742.88px" width="11.81" height="8.25" viewBox="0 0 10 10" preserveAspectRatio="none"><path d="M0 10 L10 10 L5 0 Z" fill="#111222"/></svg>
<div style="position:absolute;left:1505.81px;top:738px;width:1.12px;height:17.62px;background:#dfe0e6;"></div>
<div class="t" style="left:1527.56px;top:737.62px;font-size:14px;line-height:18px;font-weight:700;color:#4b4d5c;letter-spacing:-0.488px;">Last active</div>
<svg style="position:absolute;left:1653.28px;top:743.06px" width="11.06" height="8.81" viewBox="0 0 10 8" fill="none" stroke="#3b3d4d" stroke-width="1.6" stroke-linejoin="round"><path d="M1 1 L9 1 L5 7 Z"/></svg>
<div style="position:absolute;left:1083.75px;top:764.91px;width:588.75px;height:1.31px;background:#dcdde4;"></div>
<div class="t" style="left:1085.25px;top:777.00px;font-size:14px;line-height:18px;font-weight:400;color:#7c3fa9;letter-spacing:-0.557px;text-decoration:underline;text-decoration-thickness:1.2px;text-underline-offset:2px;">BTD-609</div>
<div class="t" style="left:1188.75px;top:777.00px;font-size:14px;line-height:18px;font-weight:400;color:#2a2b38;letter-spacing:-0.688px;">Van</div>
<div class="t" style="left:1347.19px;top:777.00px;font-size:14px;line-height:18px;font-weight:400;color:#2a2b38;letter-spacing:0.443px;">02/10/2024</div>
<div class="t" style="left:1527.56px;top:777.00px;font-size:14px;line-height:18px;font-weight:400;color:#2a2b38;">-</div>
<div style="position:absolute;left:1083.75px;top:804.7px;width:588.75px;height:1.03px;background:#e6e7ec;"></div>
<div class="t" style="left:1085.25px;top:816.09px;font-size:14px;line-height:18px;font-weight:400;color:#7c3fa9;letter-spacing:-0.328px;text-decoration:underline;text-decoration-thickness:1.2px;text-underline-offset:2px;">MCN-892</div>
<div class="t" style="left:1188.75px;top:816.09px;font-size:14px;line-height:18px;font-weight:400;color:#2a2b38;letter-spacing:-0.688px;">Van</div>
<div class="t" style="left:1347.19px;top:816.09px;font-size:14px;line-height:18px;font-weight:400;color:#2a2b38;letter-spacing:0.443px;">09/10/2024</div>
<div class="t" style="left:1527.56px;top:816.09px;font-size:14px;line-height:18px;font-weight:400;color:#2a2b38;">-</div>
<div style="position:absolute;left:1083.75px;top:843.8px;width:588.75px;height:1.03px;background:#e6e7ec;"></div>
<div class="t" style="left:1085.25px;top:855.19px;font-size:14px;line-height:18px;font-weight:400;color:#7c3fa9;letter-spacing:-0.687px;text-decoration:underline;text-decoration-thickness:1.2px;text-underline-offset:2px;">TQK-791</div>
<div class="t" style="left:1188.75px;top:855.19px;font-size:14px;line-height:18px;font-weight:400;color:#2a2b38;letter-spacing:-0.688px;">Van</div>
<div class="t" style="left:1347.19px;top:855.19px;font-size:14px;line-height:18px;font-weight:400;color:#2a2b38;letter-spacing:0.443px;">23/10/2024</div>
<div class="t" style="left:1527.56px;top:855.19px;font-size:14px;line-height:18px;font-weight:400;color:#2a2b38;">-</div>
<div style="position:absolute;left:1083.75px;top:882.89px;width:588.75px;height:1.03px;background:#e6e7ec;"></div>
<div class="t" style="left:1085.25px;top:894.28px;font-size:14px;line-height:18px;font-weight:400;color:#7c3fa9;letter-spacing:-0.576px;text-decoration:underline;text-decoration-thickness:1.2px;text-underline-offset:2px;">PLW-796</div>
<div class="t" style="left:1188.75px;top:894.28px;font-size:14px;line-height:18px;font-weight:400;color:#2a2b38;letter-spacing:-0.208px;">Skid Steer Loader</div>
<div class="t" style="left:1347.19px;top:894.28px;font-size:14px;line-height:18px;font-weight:400;color:#2a2b38;letter-spacing:0.443px;">26/10/2024</div>
<div class="t" style="left:1527.56px;top:894.28px;font-size:14px;line-height:18px;font-weight:400;color:#2a2b38;">-</div>
<div style="position:absolute;left:1083.75px;top:921.98px;width:588.75px;height:1.03px;background:#e6e7ec;"></div>
<div class="t" style="left:1085.25px;top:933.38px;font-size:14px;line-height:18px;font-weight:400;color:#7c3fa9;letter-spacing:-0.857px;text-decoration:underline;text-decoration-thickness:1.2px;text-underline-offset:2px;">DCO-971</div>
<div class="t" style="left:1188.75px;top:933.38px;font-size:14px;line-height:18px;font-weight:400;color:#2a2b38;letter-spacing:-0.164px;">Excavator</div>
<div class="t" style="left:1347.19px;top:933.38px;font-size:14px;line-height:18px;font-weight:400;color:#2a2b38;letter-spacing:0.443px;">26/10/2024</div>
<div class="t" style="left:1527.56px;top:933.38px;font-size:14px;line-height:18px;font-weight:400;color:#2a2b38;letter-spacing:0.128px;">25/06/2025, 16:08</div>
<svg style="position:absolute;left:432.94px;top:972.56px" width="8.25" height="13.88" viewBox="0 0 4.4 7.4"><rect x="0.08" y="0.08" width="1.45" height="1.45" rx="0.35" fill="#2f3140"/><rect x="0.08" y="2.98" width="1.45" height="1.45" rx="0.35" fill="#2f3140"/><rect x="0.08" y="5.88" width="1.45" height="1.45" rx="0.35" fill="#2f3140"/><rect x="2.88" y="0.08" width="1.45" height="1.45" rx="0.35" fill="#2f3140"/><rect x="2.88" y="2.98" width="1.45" height="1.45" rx="0.35" fill="#2f3140"/><rect x="2.88" y="5.88" width="1.45" height="1.45" rx="0.35" fill="#2f3140"/></svg>
<div class="t" style="left:453.38px;top:967.25px;font-size:19.2px;line-height:26px;font-weight:700;color:#131427;letter-spacing:-0.564px;">Tasks overview</div>
<svg style="position:absolute;left:1014.75px;top:972.37px" width="3.75" height="13.88" viewBox="0 0 2 7.4"><circle cx="1" cy="1.00" r="0.85" fill="#2f3140"/><circle cx="1" cy="3.70" r="0.85" fill="#2f3140"/><circle cx="1" cy="6.40" r="0.85" fill="#2f3140"/></svg>
<div class="t" style="left:432.94px;top:1010.81px;font-size:14px;line-height:18px;font-weight:700;color:#15162a;letter-spacing:-0.494px;">Task status</div>
<div class="t" style="left:737.62px;top:1010.25px;font-size:14px;line-height:18px;font-weight:700;color:#15162a;letter-spacing:-0.426px;">Pending tasks</div>
<svg style="position:absolute;left:731.25px;top:1031.25px" width="60" height="48.75" viewBox="390 550 32 26"><path d="M400.0 554.0 L402.95 554.0 L402.95 570.1 L400.0 570.1 L400.0 557.5 L395.0 559.3 L395.0 556.7 Z" fill="#7030a0"/><path fill-rule="evenodd" fill="#7030a0" d="M411.25 553.8 C415.3 553.8 417.65 556.6 417.65 560.6 L417.65 563.5 C417.65 567.5 415.3 570.3 411.25 570.3 C407.2 570.3 404.85 567.5 404.85 563.5 L404.85 560.6 C404.85 556.6 407.2 553.8 411.25 553.8 Z M411.25 556.4 C409.2 556.4 408.05 557.9 408.05 560.3 L408.05 563.8 C408.05 566.2 409.2 567.7 411.25 567.7 C413.3 567.7 414.45 566.2 414.45 563.8 L414.45 560.3 C414.45 557.9 413.3 556.4 411.25 556.4 Z"/></svg>
<svg style="position:absolute;left:506.25px;top:1012.5px" width="150" height="112.5" viewBox="270 540 80 60"><path d="M306.70 572.00 L306.70 545.80 A26.20 26.20 0 1 1 280.50 572.00 Z" fill="#6286e6" stroke="#fff" stroke-width="0.7" stroke-linejoin="round"/><path d="M306.70 572.00 L280.50 572.00 A26.20 26.20 0 0 1 283.63 559.58 Z" fill="#c43b66" stroke="#fff" stroke-width="0.7" stroke-linejoin="round"/><path d="M306.70 572.00 L283.63 559.58 A26.20 26.20 0 0 1 306.70 545.80 Z" fill="#2ca08f" stroke="#fff" stroke-width="0.7" stroke-linejoin="round"/></svg>
</div></body></html>
